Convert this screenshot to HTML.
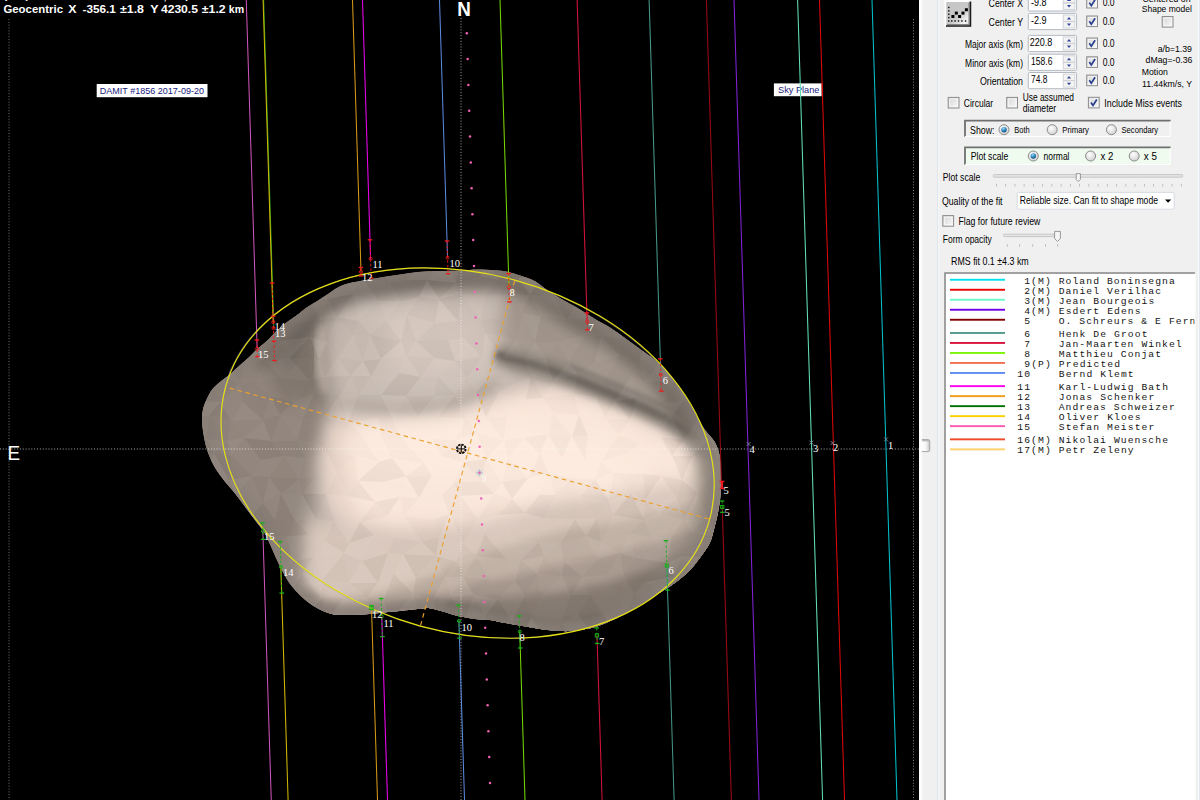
<!DOCTYPE html>
<html><head><meta charset="utf-8"><title>Occultation plot</title>
<style>
html,body{margin:0;padding:0;background:#f0f0f0;}
body{width:1200px;height:800px;overflow:hidden;font-family:"Liberation Sans",sans-serif;}
svg{display:block;font-family:"Liberation Sans",sans-serif;}
</style></head><body>
<svg width="1200" height="800" viewBox="0 0 1200 800">
<defs>
<clipPath id="ast"><path d="M202.0 420.0C201.9 416.2 202.2 413.8 202.7 411.0C203.2 408.2 203.6 406.3 205.0 403.0C206.4 399.7 209.0 394.1 211.0 391.0C213.0 387.9 215.0 386.4 217.0 384.5C219.0 382.6 221.0 381.1 223.0 379.5C225.0 377.9 226.4 377.2 229.0 375.0C231.6 372.8 235.3 369.3 238.8 366.2C242.2 363.2 246.8 359.4 249.8 356.6C252.7 353.9 253.9 352.3 256.6 349.8C259.4 347.2 262.8 344.7 266.2 341.5C269.7 338.3 273.8 333.7 277.2 330.5C280.7 327.3 283.7 324.8 286.9 322.2C290.1 319.7 293.1 317.9 296.5 315.4C299.9 312.9 303.8 309.5 307.5 307.0C311.2 304.5 315.1 302.4 318.5 300.2C321.9 298.1 325.1 296.0 328.0 294.0C330.9 292.0 333.0 290.2 336.0 288.5C339.0 286.8 342.0 285.2 346.0 284.0C350.0 282.8 355.7 281.8 360.0 281.0C364.3 280.2 367.0 279.8 372.0 279.0C377.0 278.2 383.7 277.0 390.0 276.0C396.3 275.0 404.2 273.8 410.0 273.0C415.8 272.2 420.0 271.8 425.0 271.5C430.0 271.2 434.0 271.2 440.0 271.0C446.0 270.8 454.8 270.8 461.0 270.5C467.2 270.2 471.8 269.5 477.5 269.5C483.2 269.5 490.0 269.9 495.0 270.3C500.0 270.7 503.3 270.9 507.5 271.8C511.7 272.6 515.4 273.9 520.0 275.5C524.6 277.1 530.5 278.9 535.0 281.3C539.5 283.7 542.0 286.7 547.0 290.0C552.0 293.3 559.5 297.8 565.0 301.0C570.5 304.2 575.0 306.5 580.0 309.5C585.0 312.5 590.0 316.0 595.0 319.0C600.0 322.0 605.0 324.3 610.0 327.5C615.0 330.7 620.0 334.4 625.0 338.0C630.0 341.6 635.0 345.3 640.0 349.0C645.0 352.7 650.3 356.0 655.0 360.0C659.7 364.0 664.2 368.8 668.0 373.0C671.8 377.2 674.2 380.5 677.5 385.0C680.8 389.5 684.4 395.0 687.5 400.0C690.6 405.0 693.1 410.0 696.0 415.0C698.9 420.0 701.8 425.4 705.0 430.0C708.2 434.6 712.5 437.9 715.0 442.5C717.5 447.1 719.0 452.1 720.0 457.5C721.0 462.9 720.9 468.8 721.0 475.0C721.1 481.2 721.0 488.8 720.5 495.0C720.0 501.2 719.1 506.7 718.0 512.5C716.9 518.3 715.1 525.0 713.8 530.0C712.4 535.0 711.7 538.8 710.0 542.5C708.3 546.2 706.9 548.1 703.8 552.5C700.6 556.9 695.4 564.2 691.2 568.8C687.1 573.3 682.9 576.7 678.8 580.0C674.6 583.3 671.5 585.4 666.2 588.8C661.0 592.1 654.8 595.6 647.5 600.0C640.2 604.4 630.8 610.6 622.5 615.0C614.2 619.4 605.4 623.7 597.5 626.2C589.6 628.8 581.2 629.7 575.0 630.5C568.8 631.3 565.8 631.2 560.0 631.0C554.2 630.8 546.7 629.9 540.0 629.0C533.3 628.1 526.7 626.7 520.0 625.5C513.3 624.3 505.0 622.9 500.0 622.0C495.0 621.1 494.2 620.5 490.0 620.0C485.8 619.5 479.4 619.4 475.0 618.9C470.6 618.4 466.9 617.6 463.8 617.0C460.6 616.4 458.8 616.1 456.2 615.5C453.8 614.9 451.2 614.0 448.8 613.2C446.2 612.5 443.8 611.7 441.2 611.0C438.8 610.3 435.9 609.6 433.8 609.1C431.6 608.6 430.4 608.1 428.5 608.0C426.6 607.9 424.8 608.5 422.5 608.8C420.2 609.0 418.6 609.0 415.0 609.3C411.4 609.6 406.4 610.2 401.2 610.7C396.0 611.2 389.5 611.8 383.7 612.4C377.9 613.0 372.0 613.8 366.2 614.2C360.4 614.7 353.9 615.1 348.7 615.1C343.4 615.1 339.1 615.2 334.7 614.5C330.3 613.8 326.6 612.5 322.5 610.7C318.4 608.9 314.0 606.3 310.2 603.7C306.4 601.1 302.9 598.1 299.7 595.0C296.5 591.9 293.6 588.8 291.0 585.3C288.4 581.8 286.3 578.2 284.0 574.0C281.7 569.8 279.3 565.0 277.0 560.0C274.7 555.0 272.2 548.9 270.0 544.2C267.8 539.5 266.2 535.8 263.9 532.0C261.6 528.2 259.1 525.6 256.0 521.5C252.9 517.4 249.0 512.2 245.5 507.5C242.0 502.8 238.8 498.3 235.0 493.5C231.2 488.7 226.1 483.2 222.5 478.5C218.9 473.8 216.1 469.9 213.5 465.0C210.9 460.1 208.4 454.2 206.8 449.0C205.1 443.8 204.2 438.3 203.4 433.5C202.6 428.7 202.1 423.8 202.0 420.0Z"/></clipPath>
<clipPath id="plotclip"><rect x="0" y="0" width="919" height="800"/></clipPath>
<filter id="b2" x="-50%" y="-50%" width="200%" height="200%"><feGaussianBlur stdDeviation="2"/></filter>
<filter id="b3" x="-50%" y="-50%" width="200%" height="200%"><feGaussianBlur stdDeviation="3"/></filter>
<filter id="b4" x="-50%" y="-50%" width="200%" height="200%"><feGaussianBlur stdDeviation="4"/></filter>
<filter id="b5" x="-50%" y="-50%" width="200%" height="200%"><feGaussianBlur stdDeviation="5"/></filter>
<filter id="b6" x="-50%" y="-50%" width="200%" height="200%"><feGaussianBlur stdDeviation="6"/></filter>
<filter id="b8" x="-50%" y="-50%" width="200%" height="200%"><feGaussianBlur stdDeviation="8"/></filter>
<filter id="b10" x="-50%" y="-50%" width="200%" height="200%"><feGaussianBlur stdDeviation="10"/></filter>
<filter id="b12" x="-50%" y="-50%" width="200%" height="200%"><feGaussianBlur stdDeviation="12"/></filter>
<filter id="b14" x="-50%" y="-50%" width="200%" height="200%"><feGaussianBlur stdDeviation="14"/></filter>
<filter id="b18" x="-50%" y="-50%" width="200%" height="200%"><feGaussianBlur stdDeviation="18"/></filter>
<filter id="b24" x="-50%" y="-50%" width="200%" height="200%"><feGaussianBlur stdDeviation="24"/></filter>
<linearGradient id="cb" x1="0" y1="0" x2="1" y2="1"><stop offset="0" stop-color="#d4d4d4"/><stop offset="1" stop-color="#fafafa"/></linearGradient>
<radialGradient id="rb" cx="0.4" cy="0.35" r="0.7"><stop offset="0" stop-color="#ffffff"/><stop offset="1" stop-color="#cfcfcf"/></radialGradient>
<radialGradient id="rdot" cx="0.4" cy="0.3" r="0.8"><stop offset="0" stop-color="#9fdcf5"/><stop offset="0.5" stop-color="#2a86c0"/><stop offset="1" stop-color="#0c3c66"/></radialGradient>
<linearGradient id="btn" x1="0" y1="0" x2="1" y2="1"><stop offset="0" stop-color="#c4c4c4"/><stop offset="0.55" stop-color="#c9c9c9"/><stop offset="0.8" stop-color="#f4f4f4"/><stop offset="1" stop-color="#d0d0d0"/></linearGradient>
<linearGradient id="thumb" x1="0" y1="0" x2="1" y2="0"><stop offset="0" stop-color="#ffffff"/><stop offset="0.55" stop-color="#f4f4f4"/><stop offset="1" stop-color="#c4c4c4"/></linearGradient>
<pattern id="facet" width="44" height="38" patternUnits="userSpaceOnUse" patternTransform="rotate(-8)">
<path d="M0 0L22 0L11 19Z" fill="#fff" fill-opacity="0.045"/><path d="M22 0L44 0L33 19Z" fill="#000" fill-opacity="0.035"/>
<path d="M11 19L22 0L33 19Z" fill="#000" fill-opacity="0.02"/><path d="M0 0L11 19L0 38Z" fill="#000" fill-opacity="0.04"/>
<path d="M44 0L33 19L44 38Z" fill="#fff" fill-opacity="0.03"/><path d="M11 19L33 19L22 38Z" fill="#fff" fill-opacity="0.05"/>
<path d="M11 19L22 38L0 38Z" fill="#000" fill-opacity="0.025"/><path d="M33 19L44 38L22 38Z" fill="#000" fill-opacity="0.045"/>
</pattern>
</defs>
<rect x="0" y="0" width="1200" height="800" fill="#f0f0f0"/>
<rect x="0" y="0" width="919" height="800" fill="#000"/>
<g clip-path="url(#plotclip)">
<g clip-path="url(#ast)">
<path d="M202.0 420.0C201.9 416.2 202.2 413.8 202.7 411.0C203.2 408.2 203.6 406.3 205.0 403.0C206.4 399.7 209.0 394.1 211.0 391.0C213.0 387.9 215.0 386.4 217.0 384.5C219.0 382.6 221.0 381.1 223.0 379.5C225.0 377.9 226.4 377.2 229.0 375.0C231.6 372.8 235.3 369.3 238.8 366.2C242.2 363.2 246.8 359.4 249.8 356.6C252.7 353.9 253.9 352.3 256.6 349.8C259.4 347.2 262.8 344.7 266.2 341.5C269.7 338.3 273.8 333.7 277.2 330.5C280.7 327.3 283.7 324.8 286.9 322.2C290.1 319.7 293.1 317.9 296.5 315.4C299.9 312.9 303.8 309.5 307.5 307.0C311.2 304.5 315.1 302.4 318.5 300.2C321.9 298.1 325.1 296.0 328.0 294.0C330.9 292.0 333.0 290.2 336.0 288.5C339.0 286.8 342.0 285.2 346.0 284.0C350.0 282.8 355.7 281.8 360.0 281.0C364.3 280.2 367.0 279.8 372.0 279.0C377.0 278.2 383.7 277.0 390.0 276.0C396.3 275.0 404.2 273.8 410.0 273.0C415.8 272.2 420.0 271.8 425.0 271.5C430.0 271.2 434.0 271.2 440.0 271.0C446.0 270.8 454.8 270.8 461.0 270.5C467.2 270.2 471.8 269.5 477.5 269.5C483.2 269.5 490.0 269.9 495.0 270.3C500.0 270.7 503.3 270.9 507.5 271.8C511.7 272.6 515.4 273.9 520.0 275.5C524.6 277.1 530.5 278.9 535.0 281.3C539.5 283.7 542.0 286.7 547.0 290.0C552.0 293.3 559.5 297.8 565.0 301.0C570.5 304.2 575.0 306.5 580.0 309.5C585.0 312.5 590.0 316.0 595.0 319.0C600.0 322.0 605.0 324.3 610.0 327.5C615.0 330.7 620.0 334.4 625.0 338.0C630.0 341.6 635.0 345.3 640.0 349.0C645.0 352.7 650.3 356.0 655.0 360.0C659.7 364.0 664.2 368.8 668.0 373.0C671.8 377.2 674.2 380.5 677.5 385.0C680.8 389.5 684.4 395.0 687.5 400.0C690.6 405.0 693.1 410.0 696.0 415.0C698.9 420.0 701.8 425.4 705.0 430.0C708.2 434.6 712.5 437.9 715.0 442.5C717.5 447.1 719.0 452.1 720.0 457.5C721.0 462.9 720.9 468.8 721.0 475.0C721.1 481.2 721.0 488.8 720.5 495.0C720.0 501.2 719.1 506.7 718.0 512.5C716.9 518.3 715.1 525.0 713.8 530.0C712.4 535.0 711.7 538.8 710.0 542.5C708.3 546.2 706.9 548.1 703.8 552.5C700.6 556.9 695.4 564.2 691.2 568.8C687.1 573.3 682.9 576.7 678.8 580.0C674.6 583.3 671.5 585.4 666.2 588.8C661.0 592.1 654.8 595.6 647.5 600.0C640.2 604.4 630.8 610.6 622.5 615.0C614.2 619.4 605.4 623.7 597.5 626.2C589.6 628.8 581.2 629.7 575.0 630.5C568.8 631.3 565.8 631.2 560.0 631.0C554.2 630.8 546.7 629.9 540.0 629.0C533.3 628.1 526.7 626.7 520.0 625.5C513.3 624.3 505.0 622.9 500.0 622.0C495.0 621.1 494.2 620.5 490.0 620.0C485.8 619.5 479.4 619.4 475.0 618.9C470.6 618.4 466.9 617.6 463.8 617.0C460.6 616.4 458.8 616.1 456.2 615.5C453.8 614.9 451.2 614.0 448.8 613.2C446.2 612.5 443.8 611.7 441.2 611.0C438.8 610.3 435.9 609.6 433.8 609.1C431.6 608.6 430.4 608.1 428.5 608.0C426.6 607.9 424.8 608.5 422.5 608.8C420.2 609.0 418.6 609.0 415.0 609.3C411.4 609.6 406.4 610.2 401.2 610.7C396.0 611.2 389.5 611.8 383.7 612.4C377.9 613.0 372.0 613.8 366.2 614.2C360.4 614.7 353.9 615.1 348.7 615.1C343.4 615.1 339.1 615.2 334.7 614.5C330.3 613.8 326.6 612.5 322.5 610.7C318.4 608.9 314.0 606.3 310.2 603.7C306.4 601.1 302.9 598.1 299.7 595.0C296.5 591.9 293.6 588.8 291.0 585.3C288.4 581.8 286.3 578.2 284.0 574.0C281.7 569.8 279.3 565.0 277.0 560.0C274.7 555.0 272.2 548.9 270.0 544.2C267.8 539.5 266.2 535.8 263.9 532.0C261.6 528.2 259.1 525.6 256.0 521.5C252.9 517.4 249.0 512.2 245.5 507.5C242.0 502.8 238.8 498.3 235.0 493.5C231.2 488.7 226.1 483.2 222.5 478.5C218.9 473.8 216.1 469.9 213.5 465.0C210.9 460.1 208.4 454.2 206.8 449.0C205.1 443.8 204.2 438.3 203.4 433.5C202.6 428.7 202.1 423.8 202.0 420.0Z" fill="#c6bab2"/>
<path d="M180 340L318 290L332 395L318 470L300 590L230 590L180 450Z" fill="#91857b" filter="url(#b10)"/>
<path d="M258 350L312 312L322 396L284 404Z" fill="#80756c" filter="url(#b8)"/>
<path d="M515 262L745 430L745 480L706 456L668 432L620 406L560 384L505 368L496 335L508 290Z" fill="#a4988e" filter="url(#b8)"/>
<path d="M308 520L360 529L430 530L472 526L520 516L560 503L610 496L660 490L728 468L728 655L308 655Z" fill="#d9c8bc" filter="url(#b8)"/>
<path d="M326 602L380 592L430 577L472 557L520 542L560 531L610 523L660 513L728 494L728 655L326 655Z" fill="#c2b2a6" filter="url(#b5)"/>
<path d="M398 608L440 594L472 584L520 574L560 564L610 554L660 541L728 518L728 655L398 655Z" fill="#a99a90" filter="url(#b5)"/>
<path d="M428 610L472 600L520 596L560 592L610 582L660 566L712 536L728 655L428 655Z" fill="#85796f" filter="url(#b5)"/>
<path d="M330 417L355 419L395 421L434 418L463 411L492 397L521 387.5L551 385L580 390L609 402L638 414.5L668 430L688 444L700 460L702 482L690 488L660 492L610 498L560 506L520 518L472 529L430 533L385 533L345 528L326 505L320 460Z" fill="#e9d6ca" filter="url(#b8)"/>
<path d="M350 427L395 430L440 427L470 419L500 405L530 396L555 395L585 401L615 413L645 428L672 444L690 460L690 474L640 482L585 490L540 500L500 512L460 520L420 523L385 522L358 512L346 488L342 450Z" fill="#fae7db" filter="url(#b8)"/>
<ellipse cx="500" cy="456" rx="150" ry="32" fill="#fdebdf" filter="url(#b12)" transform="rotate(6 500 456)"/>
<ellipse cx="430" cy="342" rx="72" ry="40" fill="#d6c8be" filter="url(#b14)"/>
<ellipse cx="360" cy="355" rx="24" ry="42" fill="#c9bcb2" filter="url(#b10)" transform="rotate(12 360 355)"/>
<path d="M332.0 400.0C340.0 401.2 363.7 406.0 380.0 407.0C396.3 408.0 415.0 407.8 430.0 406.0C445.0 404.2 458.7 400.3 470.0 396.0C481.3 391.7 493.3 382.7 498.0 380.0" fill="none" stroke="#b9ada3" stroke-width="9" filter="url(#b4)"/>
<path d="M496.0 355.0C502.0 356.5 521.0 360.8 532.0 364.0C543.0 367.2 552.3 370.5 562.0 374.0C571.7 377.5 580.3 381.1 590.0 385.0C599.7 388.9 610.0 393.2 620.0 397.5C630.0 401.8 640.8 406.2 650.0 410.5C659.2 414.8 667.0 418.6 675.0 423.0C683.0 427.4 690.8 432.2 698.0 437.0C705.2 441.8 714.7 449.5 718.0 452.0" fill="none" stroke="#877f76" stroke-width="18" filter="url(#b5)"/>
<path d="M496.0 355.0C502.0 356.5 521.0 360.8 532.0 364.0C543.0 367.2 552.3 370.5 562.0 374.0C571.7 377.5 580.3 381.1 590.0 385.0C599.7 388.9 610.0 393.2 620.0 397.5C630.0 401.8 640.8 406.2 650.0 410.5C659.2 414.8 667.0 418.6 675.0 423.0C683.0 427.4 690.8 432.2 698.0 437.0C705.2 441.8 714.7 449.5 718.0 452.0" fill="none" stroke="#6f6861" stroke-width="6.5" filter="url(#b2)"/>
<path d="M567.0 365.5C571.7 367.3 585.3 372.6 595.0 376.5C604.7 380.4 615.0 384.8 625.0 389.0C635.0 393.2 645.8 397.8 655.0 402.0C664.2 406.2 672.0 410.1 680.0 414.5C688.0 418.9 695.8 423.7 703.0 428.5C710.2 433.3 719.7 441.0 723.0 443.5" fill="none" stroke="#857d75" stroke-width="4" filter="url(#b2)"/>
<path d="M322.0 296.0C320.2 298.8 314.5 306.8 311.0 313.0C307.5 319.2 304.0 326.5 301.0 333.0C298.0 339.5 295.2 346.2 293.0 352.0C290.8 357.8 288.8 365.3 288.0 368.0" fill="none" stroke="#756d66" stroke-width="10" filter="url(#b3)"/>
<path d="M330.0 306.0C328.7 310.0 323.7 321.0 322.0 330.0C320.3 339.0 319.3 349.7 320.0 360.0C320.7 370.3 325.0 386.7 326.0 392.0" fill="none" stroke="#c4b7ad" stroke-width="7" filter="url(#b4)"/>
<path d="M250.0 356.0C254.5 351.8 267.5 338.7 277.0 330.5C286.5 322.3 297.2 314.0 307.0 307.0C316.8 300.0 327.2 292.8 336.0 288.5C344.8 284.2 347.7 283.6 360.0 281.0C372.3 278.4 393.2 274.8 410.0 273.0C426.8 271.2 446.0 270.8 461.0 270.5C476.0 270.2 487.7 269.2 500.0 271.0C512.3 272.8 524.2 276.3 535.0 281.3C545.8 286.3 552.5 293.3 565.0 301.0C577.5 308.7 595.0 317.7 610.0 327.5C625.0 337.3 643.3 349.6 655.0 360.0C666.7 370.4 671.7 378.3 680.0 390.0C688.3 401.7 700.8 423.3 705.0 430.0" fill="none" stroke="#6d655d" stroke-width="38" filter="url(#b8)"/>
<path d="M705.0 430.0C707.2 433.3 715.3 442.5 718.0 450.0C720.7 457.5 720.8 465.8 721.0 475.0C721.2 484.2 720.8 493.8 719.0 505.0C717.2 516.2 714.7 531.3 710.0 542.0C705.3 552.7 698.3 561.2 691.0 569.0C683.7 576.8 670.2 585.7 666.0 589.0" fill="none" stroke="#93887e" stroke-width="44" filter="url(#b8)"/>
<path d="M300.0 596.0C303.7 598.5 314.0 607.5 322.0 610.7C330.0 613.9 337.8 614.7 348.0 615.0C358.2 615.3 373.5 613.1 383.0 612.4C392.5 611.6 397.4 611.2 405.0 610.5C412.6 609.8 424.6 608.4 428.5 608.0" fill="none" stroke="#9a8e84" stroke-width="16" filter="url(#b5)"/>
<path d="M428.5 608.0C433.1 609.2 445.8 613.5 456.0 615.5C466.2 617.5 479.3 618.3 490.0 620.0C500.7 621.7 508.3 623.7 520.0 625.5C531.7 627.3 547.2 630.9 560.0 631.0C572.8 631.1 582.5 631.2 597.0 626.0C611.5 620.8 631.5 609.3 647.0 600.0C662.5 590.7 682.8 575.0 690.0 570.0" fill="none" stroke="#7a7169" stroke-width="18" filter="url(#b4)"/>
<path d="M445.0 604.0C450.8 605.0 467.5 607.8 480.0 610.0C492.5 612.2 506.7 615.0 520.0 617.0C533.3 619.0 546.7 622.2 560.0 622.0C573.3 621.8 593.3 617.0 600.0 616.0" fill="none" stroke="#6e665f" stroke-width="5" filter="url(#b3)"/>
<path d="M202.0 420.0C201.9 416.2 202.2 413.8 202.7 411.0C203.2 408.2 203.6 406.3 205.0 403.0C206.4 399.7 209.0 394.1 211.0 391.0C213.0 387.9 215.0 386.4 217.0 384.5C219.0 382.6 221.0 381.1 223.0 379.5C225.0 377.9 226.4 377.2 229.0 375.0C231.6 372.8 235.3 369.3 238.8 366.2C242.2 363.2 246.8 359.4 249.8 356.6C252.7 353.9 253.9 352.3 256.6 349.8C259.4 347.2 262.8 344.7 266.2 341.5C269.7 338.3 273.8 333.7 277.2 330.5C280.7 327.3 283.7 324.8 286.9 322.2C290.1 319.7 293.1 317.9 296.5 315.4C299.9 312.9 303.8 309.5 307.5 307.0C311.2 304.5 315.1 302.4 318.5 300.2C321.9 298.1 325.1 296.0 328.0 294.0C330.9 292.0 333.0 290.2 336.0 288.5C339.0 286.8 342.0 285.2 346.0 284.0C350.0 282.8 355.7 281.8 360.0 281.0C364.3 280.2 367.0 279.8 372.0 279.0C377.0 278.2 383.7 277.0 390.0 276.0C396.3 275.0 404.2 273.8 410.0 273.0C415.8 272.2 420.0 271.8 425.0 271.5C430.0 271.2 434.0 271.2 440.0 271.0C446.0 270.8 454.8 270.8 461.0 270.5C467.2 270.2 471.8 269.5 477.5 269.5C483.2 269.5 490.0 269.9 495.0 270.3C500.0 270.7 503.3 270.9 507.5 271.8C511.7 272.6 515.4 273.9 520.0 275.5C524.6 277.1 530.5 278.9 535.0 281.3C539.5 283.7 542.0 286.7 547.0 290.0C552.0 293.3 559.5 297.8 565.0 301.0C570.5 304.2 575.0 306.5 580.0 309.5C585.0 312.5 590.0 316.0 595.0 319.0C600.0 322.0 605.0 324.3 610.0 327.5C615.0 330.7 620.0 334.4 625.0 338.0C630.0 341.6 635.0 345.3 640.0 349.0C645.0 352.7 650.3 356.0 655.0 360.0C659.7 364.0 664.2 368.8 668.0 373.0C671.8 377.2 674.2 380.5 677.5 385.0C680.8 389.5 684.4 395.0 687.5 400.0C690.6 405.0 693.1 410.0 696.0 415.0C698.9 420.0 701.8 425.4 705.0 430.0C708.2 434.6 712.5 437.9 715.0 442.5C717.5 447.1 719.0 452.1 720.0 457.5C721.0 462.9 720.9 468.8 721.0 475.0C721.1 481.2 721.0 488.8 720.5 495.0C720.0 501.2 719.1 506.7 718.0 512.5C716.9 518.3 715.1 525.0 713.8 530.0C712.4 535.0 711.7 538.8 710.0 542.5C708.3 546.2 706.9 548.1 703.8 552.5C700.6 556.9 695.4 564.2 691.2 568.8C687.1 573.3 682.9 576.7 678.8 580.0C674.6 583.3 671.5 585.4 666.2 588.8C661.0 592.1 654.8 595.6 647.5 600.0C640.2 604.4 630.8 610.6 622.5 615.0C614.2 619.4 605.4 623.7 597.5 626.2C589.6 628.8 581.2 629.7 575.0 630.5C568.8 631.3 565.8 631.2 560.0 631.0C554.2 630.8 546.7 629.9 540.0 629.0C533.3 628.1 526.7 626.7 520.0 625.5C513.3 624.3 505.0 622.9 500.0 622.0C495.0 621.1 494.2 620.5 490.0 620.0C485.8 619.5 479.4 619.4 475.0 618.9C470.6 618.4 466.9 617.6 463.8 617.0C460.6 616.4 458.8 616.1 456.2 615.5C453.8 614.9 451.2 614.0 448.8 613.2C446.2 612.5 443.8 611.7 441.2 611.0C438.8 610.3 435.9 609.6 433.8 609.1C431.6 608.6 430.4 608.1 428.5 608.0C426.6 607.9 424.8 608.5 422.5 608.8C420.2 609.0 418.6 609.0 415.0 609.3C411.4 609.6 406.4 610.2 401.2 610.7C396.0 611.2 389.5 611.8 383.7 612.4C377.9 613.0 372.0 613.8 366.2 614.2C360.4 614.7 353.9 615.1 348.7 615.1C343.4 615.1 339.1 615.2 334.7 614.5C330.3 613.8 326.6 612.5 322.5 610.7C318.4 608.9 314.0 606.3 310.2 603.7C306.4 601.1 302.9 598.1 299.7 595.0C296.5 591.9 293.6 588.8 291.0 585.3C288.4 581.8 286.3 578.2 284.0 574.0C281.7 569.8 279.3 565.0 277.0 560.0C274.7 555.0 272.2 548.9 270.0 544.2C267.8 539.5 266.2 535.8 263.9 532.0C261.6 528.2 259.1 525.6 256.0 521.5C252.9 517.4 249.0 512.2 245.5 507.5C242.0 502.8 238.8 498.3 235.0 493.5C231.2 488.7 226.1 483.2 222.5 478.5C218.9 473.8 216.1 469.9 213.5 465.0C210.9 460.1 208.4 454.2 206.8 449.0C205.1 443.8 204.2 438.3 203.4 433.5C202.6 428.7 202.1 423.8 202.0 420.0Z" fill="none" stroke="#897f77" stroke-width="20" filter="url(#b6)" opacity="0.85"/>
<path d="M277 257L300 254L296 279ZM347 255L375 262L363 278ZM375 262L389 282L363 278ZM462 254L481 276L456 283ZM508 259L518 278L499 280ZM508 259L537 257L518 278ZM537 257L543 274L518 278ZM537 257L559 254L543 274ZM719 262L745 256L729 282ZM296 279L310 300L281 299ZM296 279L321 276L310 300ZM389 282L408 280L401 301ZM408 280L419 297L401 301ZM408 280L427 280L419 297ZM427 280L456 283L439 299ZM499 280L510 294L486 295ZM518 278L530 295L510 294ZM688 282L696 298L677 303ZM705 277L729 282L714 294ZM281 299L310 300L294 323ZM328 299L353 294L337 317ZM439 299L461 294L458 321ZM624 296L649 294L644 317ZM649 294L658 315L644 317ZM205 315L218 341L185 340ZM205 315L219 323L218 341ZM271 313L294 323L280 341ZM294 323L310 337L280 341ZM294 323L320 320L310 337ZM320 320L337 317L327 342ZM337 317L359 321L353 335ZM481 320L497 318L485 333ZM497 318L517 339L485 333ZM644 317L658 315L647 337ZM681 315L709 322L694 338ZM218 341L225 353L202 358ZM239 338L247 355L225 353ZM310 337L319 359L290 358ZM370 335L401 341L381 359ZM416 341L448 340L434 358ZM448 340L455 361L434 358ZM202 358L225 353L215 374ZM363 361L381 359L371 376ZM399 373L406 396L381 395ZM399 373L421 377L406 396ZM484 383L498 393L476 393ZM531 376L543 398L526 399ZM220 402L231 421L210 415ZM270 396L294 402L280 415ZM314 394L340 395L324 417ZM476 393L498 393L486 418ZM615 401L637 398L630 420ZM683 401L701 414L672 416ZM683 401L710 399L701 414ZM579 415L588 436L572 436ZM737 421L750 436L732 434ZM244 438L271 441L261 460ZM271 441L284 456L261 460ZM661 437L684 440L672 456ZM214 453L231 456L229 480ZM379 462L383 482L358 481ZM379 462L392 458L383 482ZM392 458L406 476L383 482ZM463 462L486 459L482 481ZM672 456L692 456L682 480ZM358 481L375 502L348 496ZM406 476L432 475L419 498ZM453 483L482 481L461 496ZM482 481L494 494L461 496ZM502 482L528 478L512 499ZM595 479L609 501L580 497ZM643 474L661 476L645 500ZM682 480L697 493L677 498ZM236 495L248 520L220 515ZM263 503L275 520L248 520ZM281 494L295 521L275 520ZM302 494L326 494L316 519ZM375 502L400 497L387 516ZM512 499L525 513L499 515ZM539 495L544 518L525 513ZM539 495L555 495L544 518ZM631 493L644 520L613 515ZM677 498L697 493L684 520ZM220 515L248 520L239 540ZM248 520L259 535L239 540ZM248 520L275 520L259 535ZM275 520L287 536L259 535ZM275 520L295 521L287 536ZM360 522L374 535L349 543ZM575 519L586 536L561 543ZM597 518L601 542L586 536ZM707 516L732 522L717 537ZM239 540L251 557L223 561ZM422 542L439 537L436 556ZM485 534L506 559L476 556ZM266 558L279 581L262 574ZM362 561L388 553L378 583ZM403 554L436 556L416 578ZM436 556L457 562L445 577ZM564 561L582 577L562 576ZM636 558L646 582L624 575ZM636 558L667 563L646 582ZM667 563L674 576L646 582ZM349 583L378 583L367 597ZM394 574L413 594L383 601ZM416 578L433 599L413 594ZM416 578L445 577L433 599ZM463 577L490 580L474 595ZM515 581L537 574L525 595ZM719 575L745 580L730 596ZM207 594L224 601L211 617ZM322 599L327 621L300 622ZM451 597L465 618L438 619ZM590 595L609 623L578 614ZM188 619L211 617L205 635ZM392 619L422 622L410 636ZM438 619L454 640L431 639ZM512 622L531 618L523 635ZM578 614L609 623L592 634ZM266 635L296 642L282 663ZM311 639L342 633L331 662ZM410 636L423 654L401 656ZM495 639L507 655L489 656ZM523 635L549 641L531 662ZM662 633L674 662L654 659ZM731 634L745 656L720 657Z" fill="#000" fill-opacity="0.041"/>
<path d="M236 257L254 258L244 278ZM576 255L588 275L565 281ZM224 281L237 296L210 298ZM224 281L244 278L237 296ZM499 280L518 278L510 294ZM662 282L677 303L649 294ZM210 298L219 323L205 315ZM254 297L271 313L248 314ZM310 300L320 320L294 323ZM419 297L439 299L435 323ZM714 294L734 318L709 322ZM219 323L239 338L218 341ZM219 323L248 314L239 338ZM337 317L353 335L327 342ZM359 321L370 335L353 335ZM407 315L416 341L401 341ZM435 323L448 340L416 341ZM481 320L485 333L464 338ZM497 318L522 313L517 339ZM541 316L557 342L535 342ZM567 320L585 335L557 342ZM255 341L280 341L265 361ZM327 342L353 335L338 358ZM464 338L485 333L482 357ZM624 339L639 362L620 356ZM624 339L647 337L639 362ZM669 342L680 357L665 354ZM694 338L720 342L703 355ZM741 342L757 362L726 360ZM726 360L757 362L737 382ZM215 374L220 402L203 401ZM324 377L340 395L314 394ZM324 377L351 376L340 395ZM603 382L631 376L615 401ZM674 380L683 401L664 403ZM314 394L324 417L303 418ZM406 396L434 396L418 417ZM596 397L615 401L605 418ZM710 399L721 419L701 414ZM210 415L227 441L206 439ZM324 417L348 423L342 440ZM672 416L701 414L684 440ZM206 439L214 453L193 456ZM297 441L305 458L284 456ZM317 442L342 440L328 454ZM456 440L463 462L442 456ZM524 438L548 434L540 454ZM548 434L572 436L562 458ZM572 436L588 436L585 460ZM328 454L355 455L337 473ZM424 463L432 475L406 476ZM540 454L549 473L528 478ZM269 477L299 479L281 494ZM337 473L358 481L348 496ZM453 483L461 496L442 496ZM572 478L580 497L555 495ZM613 473L643 474L631 493ZM661 476L682 480L677 498ZM326 494L334 521L316 519ZM375 502L387 516L360 522ZM442 496L461 496L450 514ZM461 496L478 519L450 514ZM555 495L575 519L544 518ZM555 495L580 497L575 519ZM580 497L609 501L597 518ZM718 502L732 522L707 516ZM295 521L309 535L287 536ZM433 520L450 514L439 537ZM325 541L349 543L344 553ZM539 542L544 556L521 560ZM561 543L586 536L564 561ZM717 537L735 555L707 558ZM292 562L313 557L302 574ZM344 553L349 583L323 579ZM436 556L445 577L416 578ZM521 560L537 574L515 581ZM620 553L636 558L624 575ZM707 558L735 555L719 575ZM735 555L757 560L745 580ZM194 581L214 576L207 594ZM234 577L262 574L251 602ZM490 580L498 599L474 595ZM562 576L582 577L571 595ZM624 575L646 582L634 594ZM251 602L258 615L240 623ZM289 595L300 622L285 615ZM322 599L344 597L327 621ZM383 601L413 594L392 619ZM660 599L686 594L677 619ZM704 600L730 596L722 615ZM258 615L266 635L248 637ZM350 622L366 634L342 633ZM722 615L731 634L710 641ZM722 615L741 621L731 634ZM296 642L310 655L282 663ZM387 639L410 636L401 656ZM592 634L600 658L577 661ZM592 634L611 637L600 658ZM686 634L692 663L674 662Z" fill="#000" fill-opacity="0.025"/>
<path d="M215 254L224 281L207 274ZM254 258L277 257L265 280ZM277 257L296 279L265 280ZM375 262L398 257L389 282ZM398 257L408 280L389 282ZM462 254L487 261L481 276ZM487 261L508 259L499 280ZM625 259L634 277L614 282ZM649 256L676 260L662 282ZM676 260L688 282L662 282ZM693 259L719 262L705 277ZM719 262L729 282L705 277ZM745 256L759 275L729 282ZM207 274L210 298L186 295ZM244 278L254 297L237 296ZM363 278L389 282L378 301ZM389 282L401 301L378 301ZM456 283L481 276L461 294ZM481 276L486 295L461 294ZM481 276L499 280L486 295ZM543 274L554 297L530 295ZM543 274L565 281L554 297ZM565 281L588 275L576 302ZM614 282L634 277L624 296ZM237 296L248 314L219 323ZM237 296L254 297L248 314ZM281 299L294 323L271 313ZM419 297L435 323L407 315ZM461 294L481 320L458 321ZM486 295L497 318L481 320ZM486 295L510 294L497 318ZM510 294L522 313L497 318ZM530 295L541 316L522 313ZM554 297L576 302L567 320ZM677 303L681 315L658 315ZM696 298L709 322L681 315ZM714 294L740 296L734 318ZM740 296L755 321L734 318ZM248 314L255 341L239 338ZM271 313L280 341L255 341ZM320 320L327 342L310 337ZM386 321L401 341L370 335ZM435 323L458 321L448 340ZM458 321L464 338L448 340ZM458 321L481 320L464 338ZM541 316L567 320L557 342ZM567 320L598 317L585 335ZM327 342L338 358L319 359ZM353 335L370 335L363 361ZM401 341L416 341L406 356ZM485 333L517 339L502 358ZM557 342L569 362L546 358ZM585 335L595 362L569 362ZM585 335L601 336L595 362ZM601 336L624 339L620 356ZM225 353L247 355L240 383ZM290 358L319 359L310 381ZM319 359L338 358L324 377ZM338 358L363 361L351 376ZM406 356L434 358L421 377ZM455 361L482 357L467 378ZM502 358L524 360L515 383ZM524 360L531 376L515 383ZM546 358L569 362L553 381ZM569 362L595 362L578 374ZM620 356L631 376L603 382ZM620 356L639 362L631 376ZM639 362L646 382L631 376ZM680 357L691 374L674 380ZM680 357L703 355L691 374ZM703 355L726 360L721 377ZM186 380L215 374L203 401ZM215 374L240 383L220 402ZM240 383L256 383L243 402ZM256 383L270 396L243 402ZM310 381L324 377L314 394ZM351 376L371 376L358 395ZM438 376L455 395L434 396ZM484 383L515 383L498 393ZM531 376L553 381L543 398ZM578 374L596 397L574 394ZM578 374L603 382L596 397ZM603 382L615 401L596 397ZM691 374L710 399L683 401ZM721 377L729 396L710 399ZM243 402L270 396L263 420ZM358 395L379 418L348 423ZM358 395L381 395L379 418ZM381 395L394 423L379 418ZM455 395L466 418L438 417ZM543 398L574 394L553 413ZM574 394L579 415L553 413ZM210 415L231 421L227 441ZM263 420L280 415L271 441ZM303 418L317 442L297 441ZM303 418L324 417L317 442ZM324 417L342 440L317 442ZM348 423L360 433L342 440ZM379 418L394 423L381 437ZM394 423L404 441L381 437ZM466 418L477 433L456 440ZM486 418L507 416L504 440ZM553 413L572 436L548 434ZM605 418L630 420L618 435ZM701 414L721 419L710 439ZM227 441L231 456L214 453ZM271 441L297 441L284 456ZM342 440L355 455L328 454ZM342 440L360 433L355 455ZM360 433L379 462L355 455ZM381 437L404 441L392 458ZM404 441L424 463L392 458ZM432 439L456 440L442 456ZM477 433L504 440L486 459ZM504 440L524 438L508 458ZM618 435L627 453L601 462ZM618 435L641 443L627 453ZM710 439L717 461L692 456ZM732 434L737 461L717 461ZM193 456L214 453L205 474ZM231 456L252 476L229 480ZM355 455L358 481L337 473ZM463 462L482 481L453 483ZM486 459L502 482L482 481ZM508 458L528 478L502 482ZM601 462L613 473L595 479ZM252 476L269 477L263 503ZM299 479L315 477L302 494ZM337 473L348 496L326 494ZM482 481L502 482L494 494ZM549 473L572 478L555 495ZM572 478L595 479L580 497ZM613 473L631 493L609 501ZM643 474L645 500L631 493ZM713 476L718 502L697 493ZM210 502L220 515L207 515ZM400 497L419 498L404 516ZM494 494L499 515L478 519ZM494 494L512 499L499 515ZM580 497L597 518L575 519ZM609 501L613 515L597 518ZM645 500L659 513L644 520ZM677 498L684 520L659 513ZM697 493L718 502L707 516ZM334 521L349 543L325 541ZM404 516L433 520L422 542ZM433 520L439 537L422 542ZM450 514L478 519L463 543ZM597 518L613 515L601 542ZM644 520L652 537L630 533ZM684 520L692 533L672 536ZM215 535L239 540L223 561ZM259 535L266 558L251 557ZM259 535L287 536L266 558ZM394 537L403 554L388 553ZM394 537L422 542L403 554ZM463 543L476 556L457 562ZM586 536L597 559L564 561ZM672 536L683 556L667 563ZM672 536L692 533L683 556ZM692 533L707 558L683 556ZM692 533L717 537L707 558ZM717 537L747 534L735 555ZM251 557L262 574L234 577ZM251 557L266 558L262 574ZM344 553L362 561L349 583ZM457 562L463 577L445 577ZM476 556L490 580L463 577ZM544 556L562 576L537 574ZM597 559L607 575L582 577ZM597 559L620 553L607 575ZM234 577L251 602L224 601ZM279 581L289 595L265 596ZM302 574L322 599L289 595ZM323 579L344 597L322 599ZM323 579L349 583L344 597ZM349 583L367 597L344 597ZM490 580L515 581L498 599ZM537 574L541 596L525 595ZM674 576L695 583L686 594ZM695 583L719 575L704 600ZM719 575L730 596L704 600ZM207 594L211 617L188 619ZM224 601L240 623L211 617ZM224 601L251 602L240 623ZM265 596L285 615L258 615ZM367 597L383 601L374 615ZM413 594L433 599L422 622ZM433 599L451 597L438 619ZM451 597L474 595L465 618ZM498 599L512 622L485 616ZM525 595L531 618L512 622ZM571 595L578 614L561 623ZM571 595L590 595L578 614ZM634 594L655 617L627 614ZM730 596L741 621L722 615ZM211 617L221 637L205 635ZM285 615L296 642L266 635ZM327 621L342 633L311 639ZM327 621L350 622L342 633ZM392 619L410 636L387 639ZM422 622L438 619L431 639ZM485 616L512 622L495 639ZM561 623L569 635L549 641ZM609 623L627 614L611 637ZM627 614L655 617L634 637ZM655 617L662 633L634 637ZM655 617L677 619L662 633ZM677 619L700 615L686 634ZM700 615L710 641L686 634ZM700 615L722 615L710 641ZM205 635L221 637L217 663ZM221 637L239 661L217 663ZM221 637L248 637L239 661ZM248 637L256 663L239 661ZM266 635L282 663L256 663ZM431 639L454 640L443 662ZM454 640L477 637L463 656ZM477 637L489 656L463 656ZM495 639L523 635L507 655ZM611 637L634 637L628 657Z" fill="#000" fill-opacity="0.014"/>
<path d="M188 255L215 254L207 274ZM215 254L236 257L224 281ZM236 257L244 278L224 281ZM347 255L363 278L342 279ZM425 253L427 280L408 280ZM425 253L447 256L427 280ZM447 256L462 254L456 283ZM559 254L565 281L543 274ZM606 257L614 282L588 275ZM625 259L649 256L634 277ZM676 260L693 259L688 282ZM265 280L281 299L254 297ZM321 276L342 279L328 299ZM456 283L461 294L439 299ZM565 281L576 302L554 297ZM614 282L624 296L605 294ZM729 282L740 296L714 294ZM729 282L759 275L740 296ZM310 300L328 299L320 320ZM378 301L386 321L359 321ZM510 294L530 295L522 313ZM530 295L554 297L541 316ZM554 297L567 320L541 316ZM576 302L598 317L567 320ZM649 294L677 303L658 315ZM696 298L714 294L709 322ZM248 314L271 313L255 341ZM359 321L386 321L370 335ZM407 315L435 323L416 341ZM598 317L620 323L601 336ZM620 323L624 339L601 336ZM620 323L644 317L624 339ZM658 315L669 342L647 337ZM709 322L720 342L694 338ZM709 322L734 318L720 342ZM218 341L239 338L225 353ZM239 338L255 341L247 355ZM280 341L290 358L265 361ZM370 335L381 359L363 361ZM448 340L464 338L455 361ZM517 339L535 342L524 360ZM669 342L694 338L680 357ZM694 338L703 355L680 357ZM720 342L726 360L703 355ZM720 342L741 342L726 360ZM202 358L215 374L186 380ZM225 353L240 383L215 374ZM265 361L281 378L256 383ZM319 359L324 377L310 381ZM381 359L399 373L371 376ZM381 359L406 356L399 373ZM455 361L467 378L438 376ZM524 360L546 358L531 376ZM639 362L665 354L646 382ZM665 354L680 357L674 380ZM703 355L721 377L691 374ZM240 383L243 402L220 402ZM281 378L310 381L294 402ZM371 376L381 395L358 395ZM421 377L434 396L406 396ZM421 377L438 376L434 396ZM515 383L531 376L526 399ZM553 381L574 394L543 398ZM553 381L578 374L574 394ZM631 376L646 382L637 398ZM646 382L664 403L637 398ZM674 380L691 374L683 401ZM691 374L721 377L710 399ZM737 382L749 394L729 396ZM220 402L243 402L231 421ZM270 396L280 415L263 420ZM294 402L303 418L280 415ZM406 396L418 417L394 423ZM498 393L507 416L486 418ZM526 399L530 417L507 416ZM526 399L543 398L530 417ZM574 394L596 397L579 415ZM615 401L630 420L605 418ZM664 403L672 416L652 422ZM664 403L683 401L672 416ZM710 399L729 396L721 419ZM729 396L737 421L721 419ZM729 396L749 394L737 421ZM231 421L263 420L244 438ZM280 415L297 441L271 441ZM394 423L418 417L404 441ZM418 417L432 439L404 441ZM486 418L504 440L477 433ZM507 416L530 417L524 438ZM530 417L553 413L548 434ZM605 418L618 435L588 436ZM630 420L652 422L641 443ZM672 416L684 440L661 437ZM701 414L710 439L684 440ZM721 419L737 421L732 434ZM206 439L227 441L214 453ZM244 438L261 460L231 456ZM381 437L392 458L379 462ZM404 441L432 439L424 463ZM588 436L618 435L601 462ZM231 456L261 460L252 476ZM305 458L315 477L299 479ZM305 458L328 454L315 477ZM328 454L337 473L315 477ZM355 455L379 462L358 481ZM392 458L424 463L406 476ZM486 459L508 458L502 482ZM508 458L540 454L528 478ZM540 454L562 458L549 473ZM562 458L572 478L549 473ZM627 453L643 474L613 473ZM627 453L645 458L643 474ZM645 458L661 476L643 474ZM717 461L732 476L713 476ZM737 461L754 477L732 476ZM205 474L210 502L186 495ZM252 476L263 503L236 495ZM299 479L302 494L281 494ZM315 477L326 494L302 494ZM358 481L383 482L375 502ZM383 482L406 476L400 497ZM432 475L442 496L419 498ZM549 473L555 495L539 495ZM661 476L677 498L645 500ZM682 480L713 476L697 493ZM210 502L236 495L220 515ZM236 495L263 503L248 520ZM263 503L281 494L275 520ZM326 494L348 496L334 521ZM348 496L360 522L334 521ZM400 497L404 516L387 516ZM419 498L442 496L433 520ZM512 499L539 495L525 513ZM697 493L707 516L684 520ZM295 521L316 519L309 535ZM360 522L387 516L374 535ZM387 516L394 537L374 535ZM450 514L463 543L439 537ZM478 519L485 534L463 543ZM499 515L507 537L485 534ZM525 513L544 518L539 542ZM575 519L597 518L586 536ZM613 515L644 520L630 533ZM644 520L659 513L652 537ZM659 513L672 536L652 537ZM659 513L684 520L672 536ZM732 522L747 534L717 537ZM215 535L223 561L207 555ZM309 535L325 541L313 557ZM374 535L394 537L388 553ZM439 537L457 562L436 556ZM485 534L507 537L506 559ZM561 543L564 561L544 556ZM586 536L601 542L597 559ZM630 533L652 537L636 558ZM207 555L214 576L194 581ZM207 555L223 561L214 576ZM223 561L234 577L214 576ZM292 562L302 574L279 581ZM313 557L323 579L302 574ZM362 561L378 583L349 583ZM388 553L394 574L378 583ZM506 559L521 560L515 581ZM564 561L597 559L582 577ZM620 553L624 575L607 575ZM683 556L695 583L674 576ZM735 555L745 580L719 575ZM214 576L234 577L224 601ZM262 574L279 581L265 596ZM302 574L323 579L322 599ZM378 583L394 574L383 601ZM515 581L525 595L498 599ZM582 577L607 575L590 595ZM607 575L619 598L590 595ZM624 575L634 594L619 598ZM646 582L660 599L634 594ZM674 576L686 594L660 599ZM251 602L265 596L258 615ZM289 595L322 599L300 622ZM344 597L367 597L350 622ZM367 597L374 615L350 622ZM413 594L422 622L392 619ZM433 599L438 619L422 622ZM541 596L561 623L531 618ZM541 596L571 595L561 623ZM619 598L634 594L627 614ZM686 594L700 615L677 619ZM285 615L300 622L296 642ZM300 622L311 639L296 642ZM350 622L374 615L366 634ZM374 615L392 619L387 639ZM465 618L485 616L477 637ZM561 623L578 614L569 635ZM578 614L592 634L569 635ZM609 623L611 637L592 634ZM311 639L331 662L310 655ZM342 633L366 634L346 657ZM366 634L377 655L346 657ZM410 636L431 639L423 654ZM477 637L495 639L489 656ZM523 635L531 662L507 655ZM549 641L560 662L531 662ZM611 637L628 657L600 658ZM634 637L654 659L628 657ZM634 637L662 633L654 659Z" fill="#fff" fill-opacity="0.016"/>
<path d="M254 258L265 280L244 278ZM487 261L499 280L481 276ZM693 259L705 277L688 282ZM207 274L224 281L210 298ZM342 279L353 294L328 299ZM363 278L378 301L353 294ZM688 282L705 277L696 298ZM186 295L210 298L205 315ZM210 298L237 296L219 323ZM605 294L620 323L598 317ZM605 294L624 296L620 323ZM522 313L541 316L535 342ZM734 318L755 321L741 342ZM280 341L310 337L290 358ZM464 338L482 357L455 361ZM485 333L502 358L482 357ZM517 339L524 360L502 358ZM601 336L620 356L595 362ZM647 337L665 354L639 362ZM338 358L351 376L324 377ZM434 358L438 376L421 377ZM482 357L484 383L467 378ZM482 357L502 358L484 383ZM546 358L553 381L531 376ZM371 376L399 373L381 395ZM467 378L484 383L476 393ZM631 376L637 398L615 401ZM203 401L210 415L185 420ZM203 401L220 402L210 415ZM294 402L314 394L303 418ZM434 396L438 417L418 417ZM455 395L476 393L466 418ZM543 398L553 413L530 417ZM280 415L303 418L297 441ZM348 423L379 418L360 433ZM418 417L438 417L432 439ZM466 418L486 418L477 433ZM553 413L579 415L572 436ZM652 422L661 437L641 443ZM652 422L672 416L661 437ZM360 433L381 437L379 462ZM504 440L508 458L486 459ZM548 434L562 458L540 454ZM641 443L645 458L627 453ZM641 443L661 437L645 458ZM684 440L692 456L672 456ZM684 440L710 439L692 456ZM710 439L732 434L717 461ZM732 434L750 436L737 461ZM261 460L269 477L252 476ZM261 460L284 456L269 477ZM284 456L305 458L299 479ZM442 456L453 483L432 475ZM442 456L463 462L453 483ZM562 458L585 460L572 478ZM717 461L737 461L732 476ZM269 477L281 494L263 503ZM502 482L512 499L494 494ZM595 479L613 473L609 501ZM281 494L302 494L295 521ZM348 496L375 502L360 522ZM419 498L433 520L404 516ZM461 496L494 494L478 519ZM609 501L631 493L613 515ZM645 500L677 498L659 513ZM207 515L215 535L188 537ZM207 515L220 515L215 535ZM334 521L360 522L349 543ZM387 516L404 516L394 537ZM404 516L422 542L394 537ZM478 519L499 515L485 534ZM499 515L525 513L507 537ZM684 520L707 516L692 533ZM309 535L313 557L292 562ZM374 535L388 553L362 561ZM439 537L463 543L457 562ZM507 537L521 560L506 559ZM652 537L667 563L636 558ZM266 558L292 562L279 581ZM313 557L344 553L323 579ZM457 562L476 556L463 577ZM521 560L544 556L537 574ZM683 556L707 558L695 583ZM707 558L719 575L695 583ZM279 581L302 574L289 595ZM463 577L474 595L451 597ZM562 576L571 595L541 596ZM582 577L590 595L571 595ZM646 582L674 576L660 599ZM695 583L704 600L686 594ZM745 580L751 603L730 596ZM265 596L289 595L285 615ZM344 597L350 622L327 621ZM383 601L392 619L374 615ZM474 595L485 616L465 618ZM498 599L525 595L512 622ZM660 599L677 619L655 617ZM686 594L704 600L700 615ZM704 600L722 615L700 615ZM240 623L248 637L221 637ZM438 619L465 618L454 640ZM512 622L523 635L495 639ZM741 621L754 637L731 634ZM387 639L401 656L377 655ZM431 639L443 662L423 654ZM569 635L577 661L560 662ZM686 634L710 641L692 663ZM710 641L720 657L692 663Z" fill="#fff" fill-opacity="0.030"/>
<path d="M300 254L327 261L321 276ZM447 256L456 283L427 280ZM576 255L606 257L588 275ZM606 257L625 259L614 282ZM321 276L328 299L310 300ZM342 279L363 278L353 294ZM427 280L439 299L419 297ZM518 278L543 274L530 295ZM588 275L605 294L576 302ZM588 275L614 282L605 294ZM634 277L649 294L624 296ZM705 277L714 294L696 298ZM353 294L378 301L359 321ZM378 301L401 301L386 321ZM439 299L458 321L435 323ZM576 302L605 294L598 317ZM624 296L644 317L620 323ZM386 321L407 315L401 341ZM734 318L741 342L720 342ZM255 341L265 361L247 355ZM310 337L327 342L319 359ZM401 341L406 356L381 359ZM535 342L546 358L524 360ZM647 337L669 342L665 354ZM265 361L290 358L281 378ZM290 358L310 381L281 378ZM363 361L371 376L351 376ZM406 356L421 377L399 373ZM434 358L455 361L438 376ZM569 362L578 374L553 381ZM665 354L674 380L646 382ZM438 376L467 378L455 395ZM243 402L263 420L231 421ZM340 395L358 395L348 423ZM381 395L406 396L394 423ZM434 396L455 395L438 417ZM476 393L486 418L466 418ZM498 393L526 399L507 416ZM596 397L605 418L579 415ZM263 420L271 441L244 438ZM379 418L381 437L360 433ZM438 417L466 418L456 440ZM227 441L244 438L231 456ZM432 439L442 456L424 463ZM456 440L477 433L463 462ZM524 438L540 454L508 458ZM572 436L585 460L562 458ZM661 437L672 456L645 458ZM214 453L229 480L205 474ZM424 463L442 456L432 475ZM585 460L595 479L572 478ZM585 460L601 462L595 479ZM672 456L682 480L661 476ZM205 474L229 480L210 502ZM229 480L252 476L236 495ZM383 482L400 497L375 502ZM406 476L419 498L400 497ZM528 478L539 495L512 499ZM528 478L549 473L539 495ZM732 476L746 502L718 502ZM302 494L316 519L295 521ZM442 496L450 514L433 520ZM746 502L750 513L732 522ZM287 536L309 535L292 562ZM325 541L344 553L313 557ZM349 543L362 561L344 553ZM349 543L374 535L362 561ZM507 537L539 542L521 560ZM539 542L561 543L544 556ZM601 542L620 553L597 559ZM630 533L636 558L620 553ZM652 537L672 536L667 563ZM223 561L251 557L234 577ZM403 554L416 578L394 574ZM667 563L683 556L674 576ZM262 574L265 596L251 602ZM394 574L416 578L413 594ZM445 577L463 577L451 597ZM474 595L498 599L485 616ZM730 596L751 603L741 621ZM211 617L240 623L221 637ZM465 618L477 637L454 640ZM485 616L495 639L477 637ZM531 618L549 641L523 635ZM677 619L686 634L662 633ZM296 642L311 639L310 655ZM342 633L346 657L331 662ZM549 641L569 635L560 662ZM569 635L592 634L577 661ZM710 641L731 634L720 657ZM731 634L754 637L745 656Z" fill="#fff" fill-opacity="0.048"/>
</g>
<g stroke="#b9bdb4" stroke-width="0.9" stroke-dasharray="1 1.85" fill="none">
<line x1="9" y1="19" x2="9" y2="800" stroke="#7c8076"/>
<line x1="461" y1="18" x2="461" y2="800" stroke="#fff" stroke-opacity="0.72"/>
<line x1="913.5" y1="19" x2="913.5" y2="800" stroke="#8c9086"/>
<line x1="0" y1="449" x2="919" y2="449" stroke="#fff" stroke-opacity="0.74"/>
</g>
<g stroke-width="1.05" fill="none" stroke-linecap="butt">
<line x1="246.25" y1="0" x2="257.15" y2="348.75" stroke="#cf54ba"/>
<line x1="262.84" y1="531" x2="271.25" y2="800" stroke="#cf54ba"/>
<line x1="263.6" y1="0" x2="273.85" y2="328" stroke="#1f9a1f"/>
<line x1="263.1" y1="0" x2="273.16" y2="322" stroke="#d2b800"/>
<line x1="280.82" y1="567" x2="288.10" y2="800" stroke="#d2b800"/>
<line x1="352.5" y1="0" x2="360.99" y2="271.75" stroke="#d89a18"/>
<line x1="371.48" y1="607.5" x2="377.50" y2="800" stroke="#d89a18"/>
<line x1="362.5" y1="0" x2="370.59" y2="258.75" stroke="#f000f0"/>
<line x1="381.77" y1="616.5" x2="387.50" y2="800" stroke="#f000f0"/>
<line x1="439.5" y1="0" x2="447.55" y2="257.5" stroke="#5b8ae0"/>
<line x1="458.91" y1="621" x2="464.50" y2="800" stroke="#5b8ae0"/>
<line x1="500.0" y1="0" x2="508.98" y2="287.3" stroke="#78d800"/>
<line x1="519.73" y1="631.5" x2="525.00" y2="800" stroke="#78d800"/>
<line x1="577.1" y1="0" x2="587.15" y2="321.6" stroke="#d41238"/>
<line x1="596.96" y1="635.4" x2="602.10" y2="800" stroke="#d41238"/>
<line x1="649.1" y1="0" x2="660.81" y2="374.7" stroke="#469686"/>
<line x1="666.77" y1="565.5" x2="674.10" y2="800" stroke="#469686"/>
<line x1="706.4" y1="0" x2="721.56" y2="485" stroke="#9a0a12"/>
<line x1="722.24" y1="507" x2="731.40" y2="800" stroke="#9a0a12"/>
<line x1="734.0" y1="0" x2="759.00" y2="800" stroke="#8224d8"/>
<line x1="797.6" y1="0" x2="822.60" y2="800" stroke="#62dcb6"/>
<line x1="819.5" y1="0" x2="844.50" y2="800" stroke="#e00808"/>
<line x1="872.0" y1="0" x2="897.00" y2="800" stroke="#00c4cc"/>
</g>
<ellipse cx="466.5" cy="453.1" rx="250.9" ry="179.3" transform="rotate(15.27 466.5 453.1)" fill="none" stroke="#7474c4" stroke-width="0.8" opacity="0.55"/>
<ellipse cx="467.6" cy="453.1" rx="250.9" ry="179.3" transform="rotate(15.27 467.6 453.1)" fill="none" stroke="#e6e010" stroke-width="1.2"/>
<g stroke="#eca02e" stroke-width="1.15" stroke-dasharray="4.6 3.6" fill="none">
<line x1="229.6" y1="388.1" x2="709.7" y2="519.2"/>
<line x1="514.6" y1="281" x2="420.6" y2="625.4"/>
</g>
<g fill="#ee62b4">
<circle cx="466.8" cy="33.2" r="1.25"/>
<circle cx="467.6" cy="59.1" r="1.25"/>
<circle cx="468.4" cy="84.9" r="1.25"/>
<circle cx="469.2" cy="110.8" r="1.25"/>
<circle cx="470.0" cy="136.6" r="1.25"/>
<circle cx="470.8" cy="162.4" r="1.25"/>
<circle cx="471.6" cy="188.3" r="1.25"/>
<circle cx="472.4" cy="214.2" r="1.25"/>
<circle cx="473.2" cy="240.0" r="1.25"/>
<circle cx="474.0" cy="265.9" r="1.25"/>
<circle cx="474.8" cy="291.7" r="1.25"/>
<circle cx="475.6" cy="317.6" r="1.25"/>
<circle cx="476.4" cy="343.4" r="1.25"/>
<circle cx="477.2" cy="369.2" r="1.25"/>
<circle cx="478.0" cy="395.1" r="1.25"/>
<circle cx="478.8" cy="420.9" r="1.25"/>
<circle cx="479.6" cy="446.8" r="1.25"/>
<circle cx="481.2" cy="498.5" r="1.25"/>
<circle cx="482.0" cy="524.4" r="1.25"/>
<circle cx="482.8" cy="550.2" r="1.25"/>
<circle cx="483.6" cy="576.1" r="1.25"/>
<circle cx="484.4" cy="601.9" r="1.25"/>
<circle cx="485.2" cy="627.8" r="1.25"/>
<circle cx="486.0" cy="653.6" r="1.25"/>
<circle cx="486.8" cy="679.5" r="1.25"/>
<circle cx="487.6" cy="705.3" r="1.25"/>
<circle cx="488.4" cy="731.2" r="1.25"/>
<circle cx="489.2" cy="757.0" r="1.25"/>
<circle cx="490.0" cy="782.9" r="1.25"/>
</g>
<g stroke="#a4c6d4" stroke-width="0.9"><line x1="476" y1="472.7" x2="483" y2="472.7"/><line x1="479.5" y1="469.2" x2="479.5" y2="476.2"/><line x1="477" y1="470.2" x2="482" y2="475.2"/><line x1="482" y1="470.2" x2="477" y2="475.2"/></g>
<circle cx="479.5" cy="472.7" r="1.3" fill="#ee62b4"/>
<line x1="256.88" y1="340" x2="257.40" y2="356.75" stroke="#f01818" stroke-width="0.9" stroke-dasharray="2.6 2.2"/>
<line x1="254.57" y1="340" x2="259.18" y2="340" stroke="#f01818" stroke-width="1.3"/>
<line x1="255.10" y1="356.75" x2="259.70" y2="356.75" stroke="#f01818" stroke-width="1.3"/>
<circle cx="257.15" cy="348.75" r="1.55" fill="none" stroke="#f01818" stroke-width="0.9"/>
<line x1="272.09" y1="283" x2="274.52" y2="360.5" stroke="#f01818" stroke-width="0.9" stroke-dasharray="2.6 2.2"/>
<line x1="269.79" y1="283" x2="274.39" y2="283" stroke="#f01818" stroke-width="1.3"/>
<line x1="270.83" y1="316.25" x2="275.43" y2="316.25" stroke="#f01818" stroke-width="1.3"/>
<line x1="271.61" y1="341.25" x2="276.21" y2="341.25" stroke="#f01818" stroke-width="1.3"/>
<line x1="272.22" y1="360.5" x2="276.82" y2="360.5" stroke="#f01818" stroke-width="1.3"/>
<circle cx="273.31" cy="322" r="1.55" fill="none" stroke="#f01818" stroke-width="0.9"/>
<circle cx="273.50" cy="328" r="1.55" fill="none" stroke="#f01818" stroke-width="0.9"/>
<line x1="360.86" y1="267.5" x2="361.12" y2="276" stroke="#f01818" stroke-width="0.9" stroke-dasharray="2.6 2.2"/>
<line x1="358.56" y1="267.5" x2="363.16" y2="267.5" stroke="#f01818" stroke-width="1.3"/>
<line x1="358.82" y1="276" x2="363.43" y2="276" stroke="#f01818" stroke-width="1.3"/>
<circle cx="360.99" cy="271.75" r="1.55" fill="none" stroke="#f01818" stroke-width="0.9"/>
<line x1="369.99" y1="239.8" x2="371.19" y2="278" stroke="#f01818" stroke-width="0.9" stroke-dasharray="2.6 2.2"/>
<line x1="367.69" y1="239.8" x2="372.29" y2="239.8" stroke="#f01818" stroke-width="1.3"/>
<line x1="368.89" y1="278" x2="373.49" y2="278" stroke="#f01818" stroke-width="1.3"/>
<circle cx="370.59" cy="258.75" r="1.55" fill="none" stroke="#f01818" stroke-width="0.9"/>
<line x1="447.03" y1="241" x2="448.05" y2="273.75" stroke="#f01818" stroke-width="0.9" stroke-dasharray="2.6 2.2"/>
<line x1="444.73" y1="241" x2="449.33" y2="241" stroke="#f01818" stroke-width="1.3"/>
<line x1="445.75" y1="273.75" x2="450.35" y2="273.75" stroke="#f01818" stroke-width="1.3"/>
<circle cx="447.55" cy="257.5" r="1.55" fill="none" stroke="#f01818" stroke-width="0.9"/>
<line x1="508.55" y1="273.5" x2="509.43" y2="301.9" stroke="#f01818" stroke-width="0.9" stroke-dasharray="2.6 2.2"/>
<line x1="506.25" y1="273.5" x2="510.85" y2="273.5" stroke="#f01818" stroke-width="1.3"/>
<line x1="507.13" y1="301.9" x2="511.73" y2="301.9" stroke="#f01818" stroke-width="1.3"/>
<circle cx="508.98" cy="287.3" r="1.55" fill="none" stroke="#f01818" stroke-width="0.9"/>
<line x1="586.88" y1="312.9" x2="587.41" y2="329.9" stroke="#f01818" stroke-width="0.9" stroke-dasharray="2.6 2.2"/>
<line x1="584.58" y1="312.9" x2="589.18" y2="312.9" stroke="#f01818" stroke-width="1.3"/>
<line x1="585.11" y1="329.9" x2="589.71" y2="329.9" stroke="#f01818" stroke-width="1.3"/>
<circle cx="587.15" cy="321.6" r="1.55" fill="none" stroke="#f01818" stroke-width="0.9"/>
<line x1="660.31" y1="358.8" x2="661.33" y2="391.2" stroke="#f01818" stroke-width="0.9" stroke-dasharray="2.6 2.2"/>
<line x1="658.01" y1="358.8" x2="662.61" y2="358.8" stroke="#f01818" stroke-width="1.3"/>
<line x1="659.03" y1="391.2" x2="663.62" y2="391.2" stroke="#f01818" stroke-width="1.3"/>
<circle cx="660.81" cy="374.7" r="1.55" fill="none" stroke="#f01818" stroke-width="0.9"/>
<path d="M719.6 481.6H724.4M719.8 488.6H724.6" stroke="#f01818" stroke-width="1.5" fill="none"/><rect x="720.9" y="481.6" width="2.2" height="7" fill="#f01818"/>
<line x1="262.59" y1="522.9" x2="263.11" y2="539.4" stroke="#18b018" stroke-width="0.9" stroke-dasharray="2.6 2.2"/>
<line x1="260.29" y1="522.9" x2="264.89" y2="522.9" stroke="#18b018" stroke-width="1.3"/>
<line x1="260.81" y1="539.4" x2="265.41" y2="539.4" stroke="#18b018" stroke-width="1.3"/>
<circle cx="262.84" cy="531" r="1.55" fill="none" stroke="#18b018" stroke-width="0.9"/>
<line x1="280.17" y1="541.5" x2="281.78" y2="593.1" stroke="#18b018" stroke-width="0.9" stroke-dasharray="2.6 2.2"/>
<line x1="277.87" y1="541.5" x2="282.47" y2="541.5" stroke="#18b018" stroke-width="1.3"/>
<line x1="279.48" y1="593.1" x2="284.08" y2="593.1" stroke="#18b018" stroke-width="1.3"/>
<circle cx="280.97" cy="567" r="1.55" fill="none" stroke="#18b018" stroke-width="0.9"/>
<line x1="371.43" y1="605.6" x2="371.55" y2="609.6" stroke="#18b018" stroke-width="0.9" stroke-dasharray="2.6 2.2"/>
<line x1="369.12" y1="605.6" x2="373.73" y2="605.6" stroke="#18b018" stroke-width="1.3"/>
<line x1="369.25" y1="609.6" x2="373.85" y2="609.6" stroke="#18b018" stroke-width="1.3"/>
<rect x="369.88" y="605.9" width="3.2" height="3.2" fill="none" stroke="#18b018" stroke-width="1"/>
<line x1="381.20" y1="598.5" x2="382.39" y2="636.6" stroke="#18b018" stroke-width="0.9" stroke-dasharray="2.6 2.2"/>
<line x1="378.90" y1="598.5" x2="383.50" y2="598.5" stroke="#18b018" stroke-width="1.3"/>
<line x1="380.09" y1="636.6" x2="384.69" y2="636.6" stroke="#18b018" stroke-width="1.3"/>
<circle cx="381.77" cy="616.5" r="1.55" fill="none" stroke="#18b018" stroke-width="0.9"/>
<line x1="458.41" y1="605.1" x2="459.44" y2="638.1" stroke="#18b018" stroke-width="0.9" stroke-dasharray="2.6 2.2"/>
<line x1="456.11" y1="605.1" x2="460.71" y2="605.1" stroke="#18b018" stroke-width="1.3"/>
<line x1="457.14" y1="638.1" x2="461.74" y2="638.1" stroke="#18b018" stroke-width="1.3"/>
<circle cx="458.91" cy="621" r="1.55" fill="none" stroke="#18b018" stroke-width="0.9"/>
<line x1="519.25" y1="615.9" x2="520.25" y2="648" stroke="#18b018" stroke-width="0.9" stroke-dasharray="2.6 2.2"/>
<line x1="516.95" y1="615.9" x2="521.55" y2="615.9" stroke="#18b018" stroke-width="1.3"/>
<line x1="517.95" y1="648" x2="522.55" y2="648" stroke="#18b018" stroke-width="1.3"/>
<circle cx="519.73" cy="631.5" r="1.55" fill="none" stroke="#18b018" stroke-width="0.9"/>
<line x1="596.72" y1="627.9" x2="597.21" y2="643.5" stroke="#18b018" stroke-width="0.9" stroke-dasharray="2.6 2.2"/>
<line x1="594.42" y1="627.9" x2="599.02" y2="627.9" stroke="#18b018" stroke-width="1.3"/>
<line x1="594.91" y1="643.5" x2="599.51" y2="643.5" stroke="#18b018" stroke-width="1.3"/>
<rect x="595.36" y="633.8" width="3.2" height="3.2" fill="none" stroke="#18b018" stroke-width="1"/>
<line x1="665.99" y1="540.6" x2="667.54" y2="590.1" stroke="#18b018" stroke-width="0.9" stroke-dasharray="2.6 2.2"/>
<line x1="663.69" y1="540.6" x2="668.29" y2="540.6" stroke="#18b018" stroke-width="1.3"/>
<line x1="665.24" y1="590.1" x2="669.84" y2="590.1" stroke="#18b018" stroke-width="1.3"/>
<rect x="665.17" y="563.9" width="3.2" height="3.2" fill="none" stroke="#18b018" stroke-width="1"/>
<line x1="722.06" y1="501" x2="722.41" y2="512.4" stroke="#18b018" stroke-width="0.9" stroke-dasharray="2.6 2.2"/>
<line x1="719.76" y1="501" x2="724.36" y2="501" stroke="#18b018" stroke-width="1.3"/>
<line x1="720.11" y1="512.4" x2="724.71" y2="512.4" stroke="#18b018" stroke-width="1.3"/>
<rect x="720.64" y="505.4" width="3.2" height="3.2" fill="none" stroke="#18b018" stroke-width="1"/>
<path d="M746.6 442L750.6 446M750.6 442L746.6 446" stroke="#8a93a8" stroke-width="0.8" fill="none"/>
<path d="M809.4 440.6L813.4 444.6M813.4 440.6L809.4 444.6" stroke="#8a93a8" stroke-width="0.8" fill="none"/>
<path d="M830.6 441L834.6 445M834.6 441L830.6 445" stroke="#8a93a8" stroke-width="0.8" fill="none"/>
<path d="M884 437.4L888 441.4M888 437.4L884 441.4" stroke="#8a93a8" stroke-width="0.8" fill="none"/>
<g stroke="#0a0a0a" fill="none"><circle cx="461.3" cy="448.9" r="4.3" stroke-width="1.9" stroke-dasharray="2.4 0.9"/><line x1="457.6" y1="448.9" x2="465" y2="448.9" stroke-width="1.1"/><line x1="461.3" y1="445.2" x2="461.3" y2="452.6" stroke-width="1.1"/></g>
<g font-family="Liberation Serif" font-size="10.5" fill="#fff">
<text x="258" y="357.5">15</text>
<text x="274.5" y="330">14</text>
<text x="275" y="337">13</text>
<text x="362" y="281">12</text>
<text x="372.5" y="268">11</text>
<text x="449.5" y="266.8">10</text>
<text x="509.5" y="296.4">8</text>
<text x="588.5" y="330.7">7</text>
<text x="662.7" y="383.8">6</text>
<text x="264" y="540">15</text>
<text x="283" y="576">14</text>
<text x="372" y="618">12</text>
<text x="383.4" y="627">11</text>
<text x="461.4" y="631">10</text>
<text x="519.5" y="640.5">8</text>
<text x="599" y="645">7</text>
<text x="668.6" y="574">6</text>
<text x="723.5" y="494.4">5</text>
<text x="724.4" y="516">5</text>
<text x="749.6" y="453">4</text>
<text x="813" y="451.6">3</text>
<text x="833" y="451.4">2</text>
<text x="888" y="449">1</text>
<text x="481" y="481.5" fill="#fff" fill-opacity="0.75">9</text>
</g>
<text x="457.3" y="16.2" font-size="19.5" font-weight="bold" fill="#fff" textLength="13.6" lengthAdjust="spacingAndGlyphs">N</text>
<text x="7.4" y="460.4" font-size="19.5" fill="#fff" textLength="12.6" lengthAdjust="spacingAndGlyphs">E</text>
<g font-size="11" font-weight="bold" fill="#fff">
<text x="3.4" y="12.8" textLength="59.6" lengthAdjust="spacingAndGlyphs">Geocentric</text>
<text x="68.2" y="12.8" textLength="8.3" lengthAdjust="spacingAndGlyphs">X</text>
<text x="82.6" y="12.8" textLength="33.3" lengthAdjust="spacingAndGlyphs">-356.1</text>
<text x="120" y="12.8" textLength="24" lengthAdjust="spacingAndGlyphs">±1.8</text>
<text x="150.3" y="12.8" textLength="8.3" lengthAdjust="spacingAndGlyphs">Y</text>
<text x="160.9" y="12.8" textLength="37.1" lengthAdjust="spacingAndGlyphs">4230.5</text>
<text x="201.8" y="12.8" textLength="23.9" lengthAdjust="spacingAndGlyphs">±1.2</text>
<text x="228.8" y="12.8" textLength="15.3" lengthAdjust="spacingAndGlyphs">km</text>
<text x="3.4" y="-0.9">(596)</text><text x="163.5" y="-0.2">,</text><text x="185" y="-0.9">p</text>
</g>
<rect x="96.7" y="84" width="110.8" height="13.2" fill="#fff"/>
<text x="99.7" y="93.6" font-size="9" fill="#20207c" textLength="104.3" lengthAdjust="spacingAndGlyphs">DAMIT #1856 2017-09-20</text>
<rect x="773.9" y="83.4" width="47.7" height="12.8" fill="#fff"/>
<text x="778" y="92.6" font-size="9.2" fill="#20207c" textLength="41.5" lengthAdjust="spacingAndGlyphs">Sky Plane</text>
<line x1="800.19" y1="83" x2="800.63" y2="97" stroke="#62dcb6" stroke-width="1.1"/>
<line x1="822.09" y1="83" x2="822.53" y2="97" stroke="#e00808" stroke-width="1.1"/>
</g>
<g>
<rect x="919" y="0" width="3.3" height="800" fill="#fdfdfd"/>
<rect x="937.2" y="0" width="1.1" height="800" fill="#dbe4ee"/><rect x="938.3" y="0" width="0.9" height="800" fill="#f9f9f9"/>
<rect x="1198" y="0" width="1.2" height="800" fill="#fbfbfb"/><rect x="1199.2" y="0" width="0.8" height="800" fill="#dbe4ee"/>
<path d="M921.8 439.6H928.2Q929.7 439.6 929.7 441.1V450.1Q929.7 451.6 928.2 451.6H921.8Z" fill="url(#thumb)"/><path d="M921.8 439.6H928.2Q929.7 439.6 929.7 441.1V450.1Q929.7 451.6 928.2 451.6H921.8" fill="none" stroke="#a6a6a6" stroke-width="1"/>
<rect x="922" y="440" width="7.2" height="1.4" fill="#b9b9b9"/>
<rect x="945.4" y="1.1" width="25.5" height="25.5" fill="url(#btn)"/>
<path d="M945.4 26.6V1.1H970.9" fill="none" stroke="#fff" stroke-width="1.6"/>
<path d="M946 26H970.4V1.6" fill="none" stroke="#1a1a1a" stroke-width="1.7"/>
<path d="M947.2 24.6H969V2.8" fill="none" stroke="#7c7c7c" stroke-width="1"/>
<g fill="#000">
<rect x="951.40" y="15.00" width="3" height="3"/>
<rect x="954.80" y="11.60" width="3" height="3"/>
<rect x="958.10" y="15.00" width="3" height="3"/>
<rect x="961.50" y="11.60" width="3" height="3"/>
<rect x="964.90" y="8.25" width="3" height="3"/>
<rect x="948.1" y="6.80" width="1.4" height="1.4"/>
<rect x="948.1" y="10.20" width="1.4" height="1.4"/>
<rect x="948.1" y="13.55" width="1.4" height="1.4"/>
<rect x="948.1" y="16.90" width="1.4" height="1.4"/>
<rect x="948.05" y="20.3" width="1.4" height="1.4"/>
<rect x="951.05" y="20.3" width="1.4" height="1.4"/>
<rect x="954.40" y="20.3" width="1.4" height="1.4"/>
<rect x="957.80" y="20.3" width="1.4" height="1.4"/>
<rect x="961.20" y="20.3" width="1.4" height="1.4"/>
<rect x="964.90" y="20.3" width="1.4" height="1.4"/>
</g>
<text x="1023" y="7.2" font-size="10.0" textLength="34.4" lengthAdjust="spacingAndGlyphs" text-anchor="end" fill="#000" >Center X</text>
<rect x="1028.3" y="-5.2" width="48.3" height="16.2" rx="1.2" fill="#fff" stroke="#b4b9c2" stroke-width="1"/>
<rect x="1063.2" y="-3.6" width="11.6" height="6.3" fill="#f3f3f3" stroke="#c8ccd3" stroke-width="0.8"/>
<rect x="1063.2" y="3.1000000000000005" width="11.6" height="6.3" fill="#f3f3f3" stroke="#c8ccd3" stroke-width="0.8"/>
<path d="M1066.9 0.8999999999999995L1069 -1.6L1071.1 0.8999999999999995Z" fill="#34459a"/>
<path d="M1066.9 4.999999999999999L1069 7.499999999999999L1071.1 4.999999999999999Z" fill="#34459a"/>
<text x="1031" y="5.5" font-size="10.2" textLength="15.5" lengthAdjust="spacingAndGlyphs" fill="#000" >-9.8</text>
<rect x="1086.7" y="-2.6" width="10.8" height="10.6" fill="url(#cb)" stroke="#8c8c8c" stroke-width="1"/>
<rect x="1088.3" y="-1.0" width="7.6" height="7.4" fill="none" stroke="#fafafa" stroke-width="0.9" opacity="0.9"/>
<path d="M1089.3 2.6L1091.3 5.6L1095.1000000000001 -0.3999999999999999" fill="none" stroke="#2a3f8e" stroke-width="1.7" stroke-linejoin="miter"/>
<text x="1102.7" y="6.1" font-size="10.2" textLength="11.9" lengthAdjust="spacingAndGlyphs" fill="#000" >0.0</text>
<text x="1023" y="25.8" font-size="10.0" textLength="34.4" lengthAdjust="spacingAndGlyphs" text-anchor="end" fill="#000" >Center Y</text>
<rect x="1028.3" y="13.4" width="48.3" height="16.2" rx="1.2" fill="#fff" stroke="#b4b9c2" stroke-width="1"/>
<rect x="1063.2" y="15.0" width="11.6" height="6.3" fill="#f3f3f3" stroke="#c8ccd3" stroke-width="0.8"/>
<rect x="1063.2" y="21.700000000000003" width="11.6" height="6.3" fill="#f3f3f3" stroke="#c8ccd3" stroke-width="0.8"/>
<path d="M1066.9 19.5L1069 17.0L1071.1 19.5Z" fill="#34459a"/>
<path d="M1066.9 23.6L1069 26.1L1071.1 23.6Z" fill="#34459a"/>
<text x="1031" y="24.1" font-size="10.2" textLength="15.5" lengthAdjust="spacingAndGlyphs" fill="#000" >-2.9</text>
<rect x="1086.7" y="16.0" width="10.8" height="10.6" fill="url(#cb)" stroke="#8c8c8c" stroke-width="1"/>
<rect x="1088.3" y="17.6" width="7.6" height="7.4" fill="none" stroke="#fafafa" stroke-width="0.9" opacity="0.9"/>
<path d="M1089.3 21.2L1091.3 24.2L1095.1000000000001 18.2" fill="none" stroke="#2a3f8e" stroke-width="1.7" stroke-linejoin="miter"/>
<text x="1102.7" y="24.7" font-size="10.2" textLength="11.9" lengthAdjust="spacingAndGlyphs" fill="#000" >0.0</text>
<text x="1023" y="47.8" font-size="10.0" textLength="58.1" lengthAdjust="spacingAndGlyphs" text-anchor="end" fill="#000" >Major axis (km)</text>
<rect x="1028.3" y="35.4" width="48.3" height="16.2" rx="1.2" fill="#fff" stroke="#b4b9c2" stroke-width="1"/>
<rect x="1063.2" y="37.0" width="11.6" height="6.3" fill="#f3f3f3" stroke="#c8ccd3" stroke-width="0.8"/>
<rect x="1063.2" y="43.7" width="11.6" height="6.3" fill="#f3f3f3" stroke="#c8ccd3" stroke-width="0.8"/>
<path d="M1066.9 41.5L1069 39.0L1071.1 41.5Z" fill="#34459a"/>
<path d="M1066.9 45.599999999999994L1069 48.099999999999994L1071.1 45.599999999999994Z" fill="#34459a"/>
<text x="1029.8" y="46.1" font-size="10.2" textLength="22.5" lengthAdjust="spacingAndGlyphs" fill="#000" >220.8</text>
<rect x="1086.7" y="38.0" width="10.8" height="10.6" fill="url(#cb)" stroke="#8c8c8c" stroke-width="1"/>
<rect x="1088.3" y="39.6" width="7.6" height="7.4" fill="none" stroke="#fafafa" stroke-width="0.9" opacity="0.9"/>
<path d="M1089.3 43.2L1091.3 46.2L1095.1000000000001 40.2" fill="none" stroke="#2a3f8e" stroke-width="1.7" stroke-linejoin="miter"/>
<text x="1102.7" y="46.7" font-size="10.2" textLength="11.9" lengthAdjust="spacingAndGlyphs" fill="#000" >0.0</text>
<text x="1023" y="66.6" font-size="10.0" textLength="57.9" lengthAdjust="spacingAndGlyphs" text-anchor="end" fill="#000" >Minor axis (km)</text>
<rect x="1028.3" y="54.2" width="48.3" height="16.2" rx="1.2" fill="#fff" stroke="#b4b9c2" stroke-width="1"/>
<rect x="1063.2" y="55.800000000000004" width="11.6" height="6.3" fill="#f3f3f3" stroke="#c8ccd3" stroke-width="0.8"/>
<rect x="1063.2" y="62.5" width="11.6" height="6.3" fill="#f3f3f3" stroke="#c8ccd3" stroke-width="0.8"/>
<path d="M1066.9 60.300000000000004L1069 57.800000000000004L1071.1 60.300000000000004Z" fill="#34459a"/>
<path d="M1066.9 64.4L1069 66.9L1071.1 64.4Z" fill="#34459a"/>
<text x="1031" y="64.9" font-size="10.2" textLength="21.4" lengthAdjust="spacingAndGlyphs" fill="#000" >158.6</text>
<rect x="1086.7" y="56.800000000000004" width="10.8" height="10.6" fill="url(#cb)" stroke="#8c8c8c" stroke-width="1"/>
<rect x="1088.3" y="58.400000000000006" width="7.6" height="7.4" fill="none" stroke="#fafafa" stroke-width="0.9" opacity="0.9"/>
<path d="M1089.3 62.00000000000001L1091.3 65.0L1095.1000000000001 59.00000000000001" fill="none" stroke="#2a3f8e" stroke-width="1.7" stroke-linejoin="miter"/>
<text x="1102.7" y="65.5" font-size="10.2" textLength="11.9" lengthAdjust="spacingAndGlyphs" fill="#000" >0.0</text>
<text x="1023" y="84.9" font-size="10.0" textLength="43.1" lengthAdjust="spacingAndGlyphs" text-anchor="end" fill="#000" >Orientation</text>
<rect x="1028.3" y="72.5" width="48.3" height="16.2" rx="1.2" fill="#fff" stroke="#b4b9c2" stroke-width="1"/>
<rect x="1063.2" y="74.1" width="11.6" height="6.3" fill="#f3f3f3" stroke="#c8ccd3" stroke-width="0.8"/>
<rect x="1063.2" y="80.8" width="11.6" height="6.3" fill="#f3f3f3" stroke="#c8ccd3" stroke-width="0.8"/>
<path d="M1066.9 78.6L1069 76.1L1071.1 78.6Z" fill="#34459a"/>
<path d="M1066.9 82.7L1069 85.2L1071.1 82.7Z" fill="#34459a"/>
<text x="1031" y="83.2" font-size="10.2" textLength="16.3" lengthAdjust="spacingAndGlyphs" fill="#000" >74.8</text>
<rect x="1086.7" y="75.1" width="10.8" height="10.6" fill="url(#cb)" stroke="#8c8c8c" stroke-width="1"/>
<rect x="1088.3" y="76.69999999999999" width="7.6" height="7.4" fill="none" stroke="#fafafa" stroke-width="0.9" opacity="0.9"/>
<path d="M1089.3 80.3L1091.3 83.3L1095.1000000000001 77.3" fill="none" stroke="#2a3f8e" stroke-width="1.7" stroke-linejoin="miter"/>
<text x="1102.7" y="83.8" font-size="10.2" textLength="11.9" lengthAdjust="spacingAndGlyphs" fill="#000" >0.0</text>
<text x="1142.5" y="1.6" font-size="9.6" textLength="48" lengthAdjust="spacingAndGlyphs" fill="#000" >Centered on</text>
<text x="1141.8" y="12.2" font-size="9.6" textLength="50" lengthAdjust="spacingAndGlyphs" fill="#000" >Shape model</text>
<rect x="1162.2" y="16.5" width="10.8" height="10.6" fill="url(#cb)" stroke="#8c8c8c" stroke-width="1"/>
<rect x="1163.8" y="18.1" width="7.6" height="7.4" fill="none" stroke="#fafafa" stroke-width="0.9" opacity="0.9"/>
<text x="1192" y="52.1" font-size="8.7" textLength="34.3" lengthAdjust="spacingAndGlyphs" text-anchor="end" fill="#000" >a/b=1.39</text>
<text x="1192.4" y="63.1" font-size="8.7" textLength="46.8" lengthAdjust="spacingAndGlyphs" text-anchor="end" fill="#000" >dMag=-0.36</text>
<text x="1141.8" y="75.3" font-size="8.7" textLength="26" lengthAdjust="spacingAndGlyphs" fill="#000" >Motion</text>
<text x="1142" y="87.1" font-size="8.7" textLength="50" lengthAdjust="spacingAndGlyphs" fill="#000" >11.44km/s, Y</text>
<rect x="948.2" y="97.4" width="10.8" height="10.6" fill="url(#cb)" stroke="#8c8c8c" stroke-width="1"/>
<rect x="949.8000000000001" y="99.0" width="7.6" height="7.4" fill="none" stroke="#fafafa" stroke-width="0.9" opacity="0.9"/>
<text x="963.8" y="106.5" font-size="10.2" textLength="29.3" lengthAdjust="spacingAndGlyphs" fill="#000" >Circular</text>
<rect x="1006.7" y="97.4" width="10.8" height="10.6" fill="url(#cb)" stroke="#8c8c8c" stroke-width="1"/>
<rect x="1008.3000000000001" y="99.0" width="7.6" height="7.4" fill="none" stroke="#fafafa" stroke-width="0.9" opacity="0.9"/>
<text x="1022.7" y="101.3" font-size="10" textLength="51.3" lengthAdjust="spacingAndGlyphs" fill="#000" >Use assumed</text>
<text x="1022.7" y="111.9" font-size="10" textLength="33.5" lengthAdjust="spacingAndGlyphs" fill="#000" >diameter</text>
<rect x="1088.4" y="97.3" width="10.8" height="10.6" fill="url(#cb)" stroke="#8c8c8c" stroke-width="1"/>
<rect x="1090.0" y="98.89999999999999" width="7.6" height="7.4" fill="none" stroke="#fafafa" stroke-width="0.9" opacity="0.9"/>
<path d="M1091.0 102.5L1093.0 105.5L1096.8000000000002 99.5" fill="none" stroke="#2a3f8e" stroke-width="1.7" stroke-linejoin="miter"/>
<text x="1104.3" y="106.5" font-size="10.2" textLength="77.7" lengthAdjust="spacingAndGlyphs" fill="#000" >Include Miss events</text>
<rect x="964.4" y="119.8" width="206.2" height="17" fill="#f0f0f0"/>
<path d="M965.0 136.8V120.7H1170.6" fill="none" stroke="#6f6f6f" stroke-width="1.8"/>
<path d="M965.0 136.4H1170.1999999999998V121.39999999999999" fill="none" stroke="#fff" stroke-width="1"/>
<text x="970" y="134.1" font-size="10.5" textLength="24.5" lengthAdjust="spacingAndGlyphs" fill="#000" >Show:</text>
<circle cx="1004" cy="129.7" r="5" fill="url(#rb)" stroke="#8c8c8c" stroke-width="1"/>
<circle cx="1004" cy="129.7" r="2.7" fill="url(#rdot)"/>
<text x="1014.3" y="133.3" font-size="8.3" textLength="15.5" lengthAdjust="spacingAndGlyphs" fill="#000" >Both</text>
<circle cx="1052.2" cy="129.7" r="5" fill="url(#rb)" stroke="#8c8c8c" stroke-width="1"/>
<text x="1062.3" y="133.3" font-size="8.3" textLength="26.7" lengthAdjust="spacingAndGlyphs" fill="#000" >Primary</text>
<circle cx="1111.4" cy="129.7" r="5" fill="url(#rb)" stroke="#8c8c8c" stroke-width="1"/>
<text x="1121.5" y="133.3" font-size="8.3" textLength="36.5" lengthAdjust="spacingAndGlyphs" fill="#000" >Secondary</text>
<rect x="964.4" y="146.4" width="206.2" height="18.4" fill="#effbef"/>
<path d="M965.0 164.8V147.3H1170.6" fill="none" stroke="#6f6f6f" stroke-width="1.8"/>
<path d="M965.0 164.4H1170.1999999999998V148.0" fill="none" stroke="#fff" stroke-width="1"/>
<text x="970.8" y="160.0" font-size="10.2" textLength="37.5" lengthAdjust="spacingAndGlyphs" fill="#000" >Plot scale</text>
<circle cx="1033.3" cy="156" r="5" fill="url(#rb)" stroke="#8c8c8c" stroke-width="1"/>
<circle cx="1033.3" cy="156" r="2.7" fill="url(#rdot)"/>
<text x="1043.5" y="160.0" font-size="10.2" textLength="26" lengthAdjust="spacingAndGlyphs" fill="#000" >normal</text>
<circle cx="1090.6" cy="156" r="5" fill="url(#rb)" stroke="#8c8c8c" stroke-width="1"/>
<text x="1100.6" y="160.0" font-size="10.2" textLength="12.8" lengthAdjust="spacingAndGlyphs" fill="#000" >x 2</text>
<circle cx="1134.2" cy="156" r="5" fill="url(#rb)" stroke="#8c8c8c" stroke-width="1"/>
<text x="1143.8" y="160.0" font-size="10.2" textLength="13.1" lengthAdjust="spacingAndGlyphs" fill="#000" >x 5</text>
<text x="942.8" y="180.7" font-size="10.2" textLength="37.5" lengthAdjust="spacingAndGlyphs" fill="#000" >Plot scale</text>
<rect x="993.3" y="174.6" width="189.4" height="2.6" rx="1" fill="#e6e6e6" stroke="#b6b6b6" stroke-width="0.7"/>
<rect x="996.00" y="183.8" width="0.8" height="2.8" fill="#b4b4b4"/>
<rect x="1005.25" y="183.8" width="0.8" height="2.8" fill="#b4b4b4"/>
<rect x="1014.49" y="183.8" width="0.8" height="2.8" fill="#b4b4b4"/>
<rect x="1023.74" y="183.8" width="0.8" height="2.8" fill="#b4b4b4"/>
<rect x="1032.99" y="183.8" width="0.8" height="2.8" fill="#b4b4b4"/>
<rect x="1042.23" y="183.8" width="0.8" height="2.8" fill="#b4b4b4"/>
<rect x="1051.48" y="183.8" width="0.8" height="2.8" fill="#b4b4b4"/>
<rect x="1060.73" y="183.8" width="0.8" height="2.8" fill="#b4b4b4"/>
<rect x="1069.98" y="183.8" width="0.8" height="2.8" fill="#b4b4b4"/>
<rect x="1079.22" y="183.8" width="0.8" height="2.8" fill="#b4b4b4"/>
<rect x="1088.47" y="183.8" width="0.8" height="2.8" fill="#b4b4b4"/>
<rect x="1097.72" y="183.8" width="0.8" height="2.8" fill="#b4b4b4"/>
<rect x="1106.96" y="183.8" width="0.8" height="2.8" fill="#b4b4b4"/>
<rect x="1116.21" y="183.8" width="0.8" height="2.8" fill="#b4b4b4"/>
<rect x="1125.46" y="183.8" width="0.8" height="2.8" fill="#b4b4b4"/>
<rect x="1134.70" y="183.8" width="0.8" height="2.8" fill="#b4b4b4"/>
<rect x="1143.95" y="183.8" width="0.8" height="2.8" fill="#b4b4b4"/>
<rect x="1153.20" y="183.8" width="0.8" height="2.8" fill="#b4b4b4"/>
<rect x="1162.45" y="183.8" width="0.8" height="2.8" fill="#b4b4b4"/>
<rect x="1171.69" y="183.8" width="0.8" height="2.8" fill="#b4b4b4"/>
<rect x="1180.94" y="183.8" width="0.8" height="2.8" fill="#b4b4b4"/>
<path d="M1076.2 173.6H1080.4V179.4L1078.3 181.6L1076.2 179.4Z" fill="#f6f6f6" stroke="#8f8f8f" stroke-width="0.9"/>
<text x="942" y="204.9" font-size="10.2" textLength="60.5" lengthAdjust="spacingAndGlyphs" fill="#000" >Quality of the fit</text>
<rect x="1017.2" y="192.4" width="157" height="16.8" rx="1.2" fill="#fff" stroke="#d6dae0" stroke-width="1"/>
<text x="1019.7" y="204.1" font-size="10.4" textLength="138.3" lengthAdjust="spacingAndGlyphs" fill="#000" >Reliable size. Can fit to shape mode</text>
<path d="M1165 199.6H1171.2L1168.1 202.8Z" fill="#000"/>
<rect x="942.8" y="215.6" width="10.8" height="10.6" fill="url(#cb)" stroke="#8c8c8c" stroke-width="1"/>
<rect x="944.4" y="217.2" width="7.6" height="7.4" fill="none" stroke="#fafafa" stroke-width="0.9" opacity="0.9"/>
<text x="958.5" y="225.1" font-size="10.2" textLength="81.8" lengthAdjust="spacingAndGlyphs" fill="#000" >Flag for future review</text>
<text x="942.8" y="242.5" font-size="10.2" textLength="49" lengthAdjust="spacingAndGlyphs" fill="#000" >Form opacity</text>
<rect x="1003.5" y="234.2" width="54.5" height="2.4" rx="1" fill="#e6e6e6" stroke="#b6b6b6" stroke-width="0.7"/>
<rect x="1006.90" y="244" width="0.8" height="2.8" fill="#b4b4b4"/>
<rect x="1019.30" y="244" width="0.8" height="2.8" fill="#b4b4b4"/>
<rect x="1032.30" y="244" width="0.8" height="2.8" fill="#b4b4b4"/>
<rect x="1045.10" y="244" width="0.8" height="2.8" fill="#b4b4b4"/>
<rect x="1057.40" y="244" width="0.8" height="2.8" fill="#b4b4b4"/>
<path d="M1054.6 231.4H1060.4V238.6L1057.5 241.4L1054.6 238.6Z" fill="#f6f6f6" stroke="#8f8f8f" stroke-width="0.9"/>
<text x="951" y="264.9" font-size="10.4" textLength="77.7" lengthAdjust="spacingAndGlyphs" fill="#000" >RMS fit 0.1 ±4.3 km</text>
<rect x="944.3" y="272.2" width="250.6" height="540" fill="#fff"/>
<path d="M945 800V272.9H1195" fill="none" stroke="#828282" stroke-width="1.5"/>
<path d="M1195.1 273.6V800" fill="none" stroke="#fff" stroke-width="0.9"/>
<clipPath id="legclip"><rect x="946" y="273.6" width="248.6" height="530"/></clipPath>
<g clip-path="url(#legclip)" font-family="Liberation Mono" font-size="9.7" fill="#141414">
<rect x="950" y="278.80" width="55" height="1.9" fill="#00e2ee"/>
<text x="1017.3" y="283.80" textLength="157.5" lengthAdjust="spacing" xml:space="preserve"> 1(M) Roland Boninsegna</text>
<rect x="950" y="288.80" width="55" height="1.9" fill="#ec0000"/>
<text x="1017.3" y="293.80" textLength="143.8" lengthAdjust="spacing" xml:space="preserve"> 2(M) Daniel Verilhac</text>
<rect x="950" y="298.80" width="55" height="1.9" fill="#6cf8cc"/>
<text x="1017.3" y="303.80" textLength="137.0" lengthAdjust="spacing" xml:space="preserve"> 3(M) Jean Bourgeois</text>
<rect x="950" y="308.80" width="55" height="1.9" fill="#7000ea"/>
<text x="1017.3" y="313.80" textLength="123.3" lengthAdjust="spacing" xml:space="preserve"> 4(M) Esdert Edens</text>
<rect x="950" y="318.80" width="55" height="1.9" fill="#840000"/>
<text x="1017.3" y="323.80" textLength="178.1" lengthAdjust="spacing" xml:space="preserve"> 5    O. Schreurs &amp; E Fern</text>
<rect x="950" y="332.00" width="55" height="1.9" fill="#4f9a8b"/>
<text x="1017.3" y="337.00" textLength="130.2" lengthAdjust="spacing" xml:space="preserve"> 6    Henk De Groot</text>
<rect x="950" y="342.00" width="55" height="1.9" fill="#d8143c"/>
<text x="1017.3" y="347.00" textLength="164.4" lengthAdjust="spacing" xml:space="preserve"> 7    Jan-Maarten Winkel</text>
<rect x="950" y="352.00" width="55" height="1.9" fill="#7af408"/>
<text x="1017.3" y="357.00" textLength="143.8" lengthAdjust="spacing" xml:space="preserve"> 8    Matthieu Conjat</text>
<rect x="950" y="362.00" width="55" height="1.9" fill="#f07050"/>
<text x="1017.3" y="367.00" textLength="102.8" lengthAdjust="spacing" xml:space="preserve"> 9(P) Predicted</text>
<rect x="950" y="372.00" width="55" height="1.9" fill="#5c8cf0"/>
<text x="1017.3" y="377.00" textLength="116.4" lengthAdjust="spacing" xml:space="preserve">10    Bernd Klemt</text>
<rect x="950" y="385.20" width="55" height="1.9" fill="#ff00f0"/>
<text x="1017.3" y="390.20" textLength="150.7" lengthAdjust="spacing" xml:space="preserve">11    Karl-Ludwig Bath</text>
<rect x="950" y="395.20" width="55" height="1.9" fill="#f09a18"/>
<text x="1017.3" y="400.20" textLength="137.0" lengthAdjust="spacing" xml:space="preserve">12    Jonas Schenker</text>
<rect x="950" y="405.20" width="55" height="1.9" fill="#007000"/>
<text x="1017.3" y="410.20" textLength="157.5" lengthAdjust="spacing" xml:space="preserve">13    Andreas Schweizer</text>
<rect x="950" y="415.20" width="55" height="1.9" fill="#fcd000"/>
<text x="1017.3" y="420.20" textLength="123.3" lengthAdjust="spacing" xml:space="preserve">14    Oliver Kloes</text>
<rect x="950" y="425.20" width="55" height="1.9" fill="#fc58b0"/>
<text x="1017.3" y="430.20" textLength="137.0" lengthAdjust="spacing" xml:space="preserve">15    Stefan Meister</text>
<rect x="950" y="438.40" width="55" height="1.9" fill="#f04a28"/>
<text x="1017.3" y="443.40" textLength="150.7" lengthAdjust="spacing" xml:space="preserve">16(M) Nikolai Wuensche</text>
<rect x="950" y="448.40" width="55" height="1.9" fill="#ffd06a"/>
<text x="1017.3" y="453.40" textLength="116.4" lengthAdjust="spacing" xml:space="preserve">17(M) Petr Zeleny</text>
</g>
</g>
</svg></body></html>
